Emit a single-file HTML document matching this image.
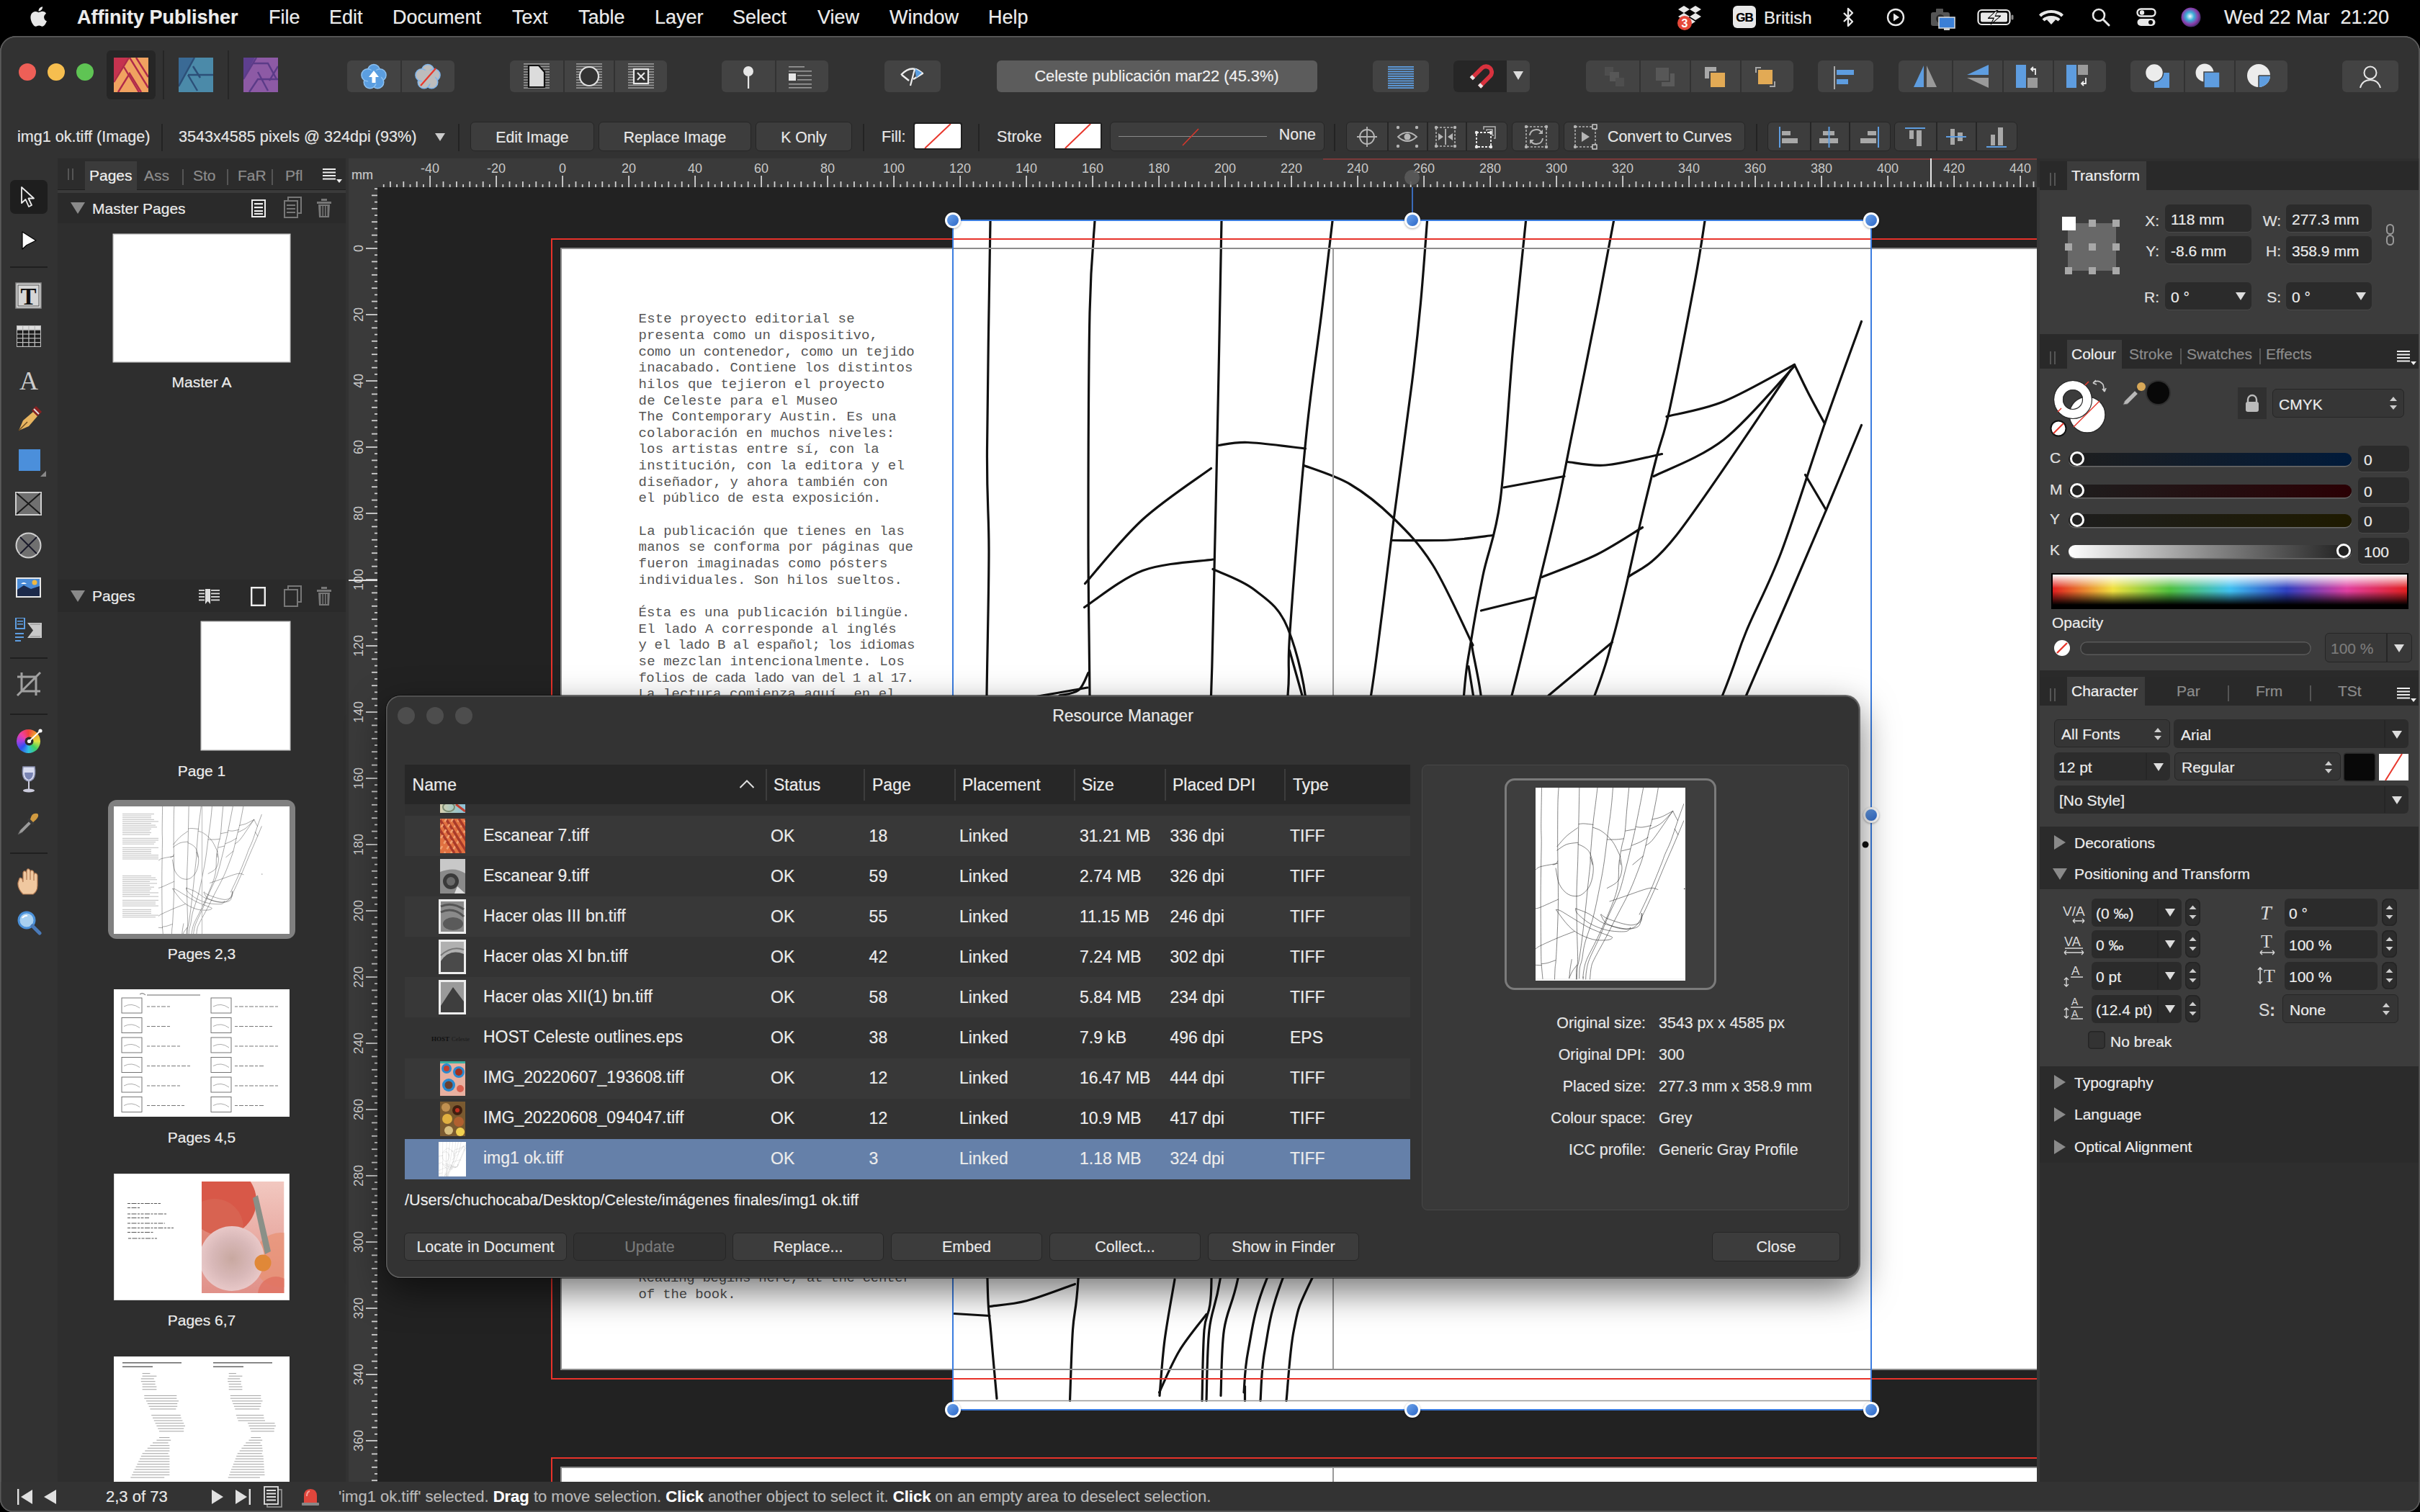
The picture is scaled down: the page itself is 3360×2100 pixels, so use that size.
<!DOCTYPE html><html><head><meta charset="utf-8"><style>
html,body{margin:0;padding:0;}
body{width:3360px;height:2100px;position:relative;overflow:hidden;background:#000;font-family:"Liberation Sans",sans-serif;-webkit-text-stroke:0.2px currentColor;}
pre,.mono{-webkit-text-stroke:0;}
</style></head><body><svg width="0" height="0" style="position:absolute"><defs><symbol id="sk" viewBox="0 0 1275 1651" preserveAspectRatio="none"><rect width="1275" height="1651" fill="#fff"/><g fill="none" stroke="#111" stroke-width="3.2" stroke-linecap="round" stroke-linejoin="round"><path d="M52.0,0.0C51.2,53.3 47.8,243.3 47.5,320.0C47.2,396.7 50.1,403.5 50.0,460.0C49.9,516.5 48.0,585.7 47.0,659.0C46.0,732.3 44.3,809.8 44.0,900.0C43.7,990.2 44.3,1105.0 45.0,1200.0C45.7,1295.0 46.8,1413.3 48.0,1470.0C49.2,1526.7 50.3,1512.4 52.5,1540.0C54.7,1567.6 59.6,1619.6 61.0,1635.5"/><path d="M197.0,0.0C195.8,21.2 191.5,54.2 190.0,127.0C188.5,199.8 188.0,348.3 188.0,437.0C188.0,525.7 189.2,569.0 190.0,659.0C190.8,749.0 193.8,878.5 193.0,977.0C192.2,1075.5 188.2,1167.8 185.0,1250.0C181.8,1332.2 177.1,1421.7 174.0,1470.0C170.9,1518.3 168.4,1511.9 166.5,1540.0C164.6,1568.1 163.2,1622.1 162.5,1638.5"/><path d="M373.0,0.0C372.2,43.3 370.0,165.0 368.0,260.0C366.0,355.0 362.6,503.5 361.0,570.0C359.4,636.5 360.4,600.7 358.5,659.0C356.6,717.3 350.6,829.8 349.5,920.0C348.4,1010.2 350.4,1108.3 352.0,1200.0C353.6,1291.7 359.5,1413.3 359.0,1470.0C358.5,1526.7 351.2,1511.9 349.0,1540.0C346.8,1568.1 346.5,1622.1 346.0,1638.5"/><path d="M527.0,0.0C524.5,21.2 518.2,76.3 512.0,127.0C505.8,177.7 497.3,230.2 490.0,304.0C482.7,377.8 472.2,510.8 468.0,570.0C463.8,629.2 468.7,614.8 465.0,659.0C461.3,703.2 452.5,772.5 446.0,835.0C439.5,897.5 434.5,956.5 426.0,1034.0C417.5,1111.5 404.2,1227.3 395.0,1300.0C385.8,1372.7 377.5,1430.0 371.0,1470.0C364.5,1510.0 359.2,1511.9 356.0,1540.0C352.8,1568.1 352.7,1622.1 352.0,1638.5"/><path d="M658.5,0.0C657.0,18.9 653.0,76.2 649.5,113.5C646.0,150.8 643.8,173.1 637.5,224.0C631.2,274.9 618.5,365.0 611.5,419.0C604.5,473.0 600.7,508.0 595.5,548.0C590.3,588.0 587.3,616.0 580.5,659.0C573.7,702.0 569.2,732.2 554.5,806.0C539.8,879.8 514.4,1014.7 492.0,1102.0C469.6,1189.3 436.1,1268.7 420.0,1330.0C403.9,1391.3 402.8,1435.0 395.5,1470.0C388.2,1505.0 380.4,1513.1 376.5,1540.0C372.6,1566.9 372.8,1616.2 372.0,1631.5"/><path d="M795.5,0.0C792.5,29.9 783.4,114.8 777.5,179.5C771.6,244.2 766.9,335.9 760.0,388.0C753.1,440.1 742.9,458.5 736.0,492.0C729.1,525.5 722.9,561.2 718.5,589.0C714.1,616.8 713.2,613.3 709.5,659.0C705.8,704.7 710.6,793.8 696.0,863.0C681.4,932.2 651.3,1001.2 622.0,1074.0C592.7,1146.8 551.1,1234.0 520.0,1300.0C488.9,1366.0 453.8,1425.2 435.5,1470.0C417.2,1514.8 415.2,1542.8 410.0,1569.0C404.8,1595.2 405.0,1617.3 404.0,1627.0"/><path d="M917.5,0.0C913.5,21.2 903.4,76.3 893.5,127.0C883.6,177.7 866.9,259.7 858.0,304.0C849.1,348.3 847.4,359.7 840.0,393.0C832.6,426.3 824.2,459.7 813.5,504.0C802.8,548.3 792.8,594.5 776.0,659.0C759.2,723.5 737.7,820.8 713.0,891.0C688.3,961.2 656.8,1013.5 628.0,1080.0C599.2,1146.5 568.4,1225.0 540.0,1290.0C511.6,1355.0 475.3,1423.5 457.5,1470.0C439.7,1516.5 438.1,1540.9 433.0,1569.0C427.9,1597.1 428.0,1626.9 427.0,1638.5"/><path d="M1044.0,0.0C1041.8,13.7 1038.6,38.7 1030.5,82.0C1022.4,125.3 1004.3,219.3 995.5,260.0C986.7,300.7 984.2,300.2 977.5,326.0C970.8,351.8 962.8,384.0 955.5,415.0C948.2,446.0 940.2,484.0 933.5,512.0C926.8,540.0 922.6,558.5 915.5,583.0C908.4,607.5 909.6,609.7 891.0,659.0C872.4,708.3 837.5,805.2 804.0,879.0C770.5,952.8 724.0,1035.2 690.0,1102.0C656.0,1168.8 632.0,1218.7 600.0,1280.0C568.0,1341.3 519.1,1426.7 498.0,1470.0C476.9,1513.3 479.3,1511.9 473.5,1540.0C467.7,1568.1 464.8,1622.1 463.0,1638.5"/><path d="M1261.5,139.5C1253.0,163.2 1229.0,228.2 1210.5,281.5C1192.0,334.8 1168.7,410.9 1150.5,459.0C1132.3,507.1 1115.2,536.7 1101.5,570.0C1087.8,603.3 1089.8,605.5 1068.5,659.0C1047.2,712.5 1004.8,820.0 974.0,891.0C943.2,962.0 899.0,1052.7 884.0,1085.0"/><path d="M1261.5,283.5C1253.3,303.2 1229.5,361.2 1212.5,401.5C1195.5,441.8 1178.0,482.6 1159.5,525.5C1141.0,568.4 1128.1,596.6 1101.5,659.0C1074.9,721.4 1036.9,818.2 1000.0,900.0C963.1,981.8 911.8,1098.7 880.0,1150.0C848.2,1201.3 820.8,1198.3 809.0,1208.0"/><path d="M369.0,311.5C375.8,310.8 389.4,306.8 409.5,307.5C429.6,308.2 476.2,314.6 489.5,316.0"/><path d="M183.5,503.5C196.8,488.7 234.3,441.2 263.5,414.5C292.7,387.8 342.7,355.3 358.5,343.5"/><path d="M487.5,339.5C498.2,343.8 530.8,353.3 551.5,365.5C572.2,377.7 592.3,393.8 611.5,412.5C630.7,431.2 648.1,448.6 666.5,478.0C684.9,507.4 712.8,570.5 722.0,589.0"/><path d="M720.5,589.5C722.9,607.9 738.4,664.9 735.0,700.0C731.6,735.1 721.0,773.3 700.0,800.0C679.0,826.7 624.2,850.0 609.0,860.0"/><path d="M182.5,536.5C196.0,528.0 233.8,496.6 263.5,485.5C293.2,474.4 344.8,472.6 361.0,470.0"/><path d="M361.0,483.5C370.6,488.2 401.2,498.3 418.5,512.0C435.8,525.7 452.8,535.0 465.0,565.5C477.2,596.0 492.0,650.9 492.0,695.0C492.0,739.1 480.3,794.2 465.0,830.0C449.7,865.8 422.3,893.7 400.0,910.0C377.7,926.3 354.3,929.7 331.0,928.0C307.7,926.3 281.8,918.0 260.0,900.0C238.2,882.0 214.7,855.0 200.0,820.0C185.3,785.0 176.7,711.7 172.0,690.0"/><path d="M467.5,596.5L485.0,659.0"/><path d="M609.0,443.5C622.5,443.4 666.6,444.2 690.0,443.0C713.4,441.8 739.6,437.6 749.5,436.5"/><path d="M148.0,659.0C152.4,657.8 167.8,656.8 174.5,651.5C181.2,646.2 185.8,631.5 188.0,627.5"/><path d="M991.0,271.5C1004.2,268.0 1040.9,262.5 1070.5,250.5C1100.1,238.5 1152.2,208.0 1168.5,199.5"/><path d="M1168.5,199.5C1171.7,206.0 1180.5,224.8 1187.5,238.5C1194.5,252.2 1206.7,274.3 1210.5,281.5"/><path d="M973.0,354.5C989.2,346.0 1037.9,329.0 1070.5,303.5C1103.1,278.0 1152.2,218.5 1168.5,201.5"/><path d="M937.5,494.5C948.7,484.8 966.8,484.5 1004.5,436.5C1042.2,388.5 1137.0,244.8 1163.5,206.5"/><path d="M853.5,334.5C862.3,335.2 884.7,340.8 906.5,339.0C928.3,337.2 971.5,326.1 984.5,323.5"/><path d="M765.0,370.0L849.0,354.5"/><path d="M818.0,494.5C830.6,489.3 870.2,475.0 893.5,463.5C916.8,452.0 946.8,431.8 957.5,425.5"/><path d="M733.5,541.0L807.0,523.0"/><path d="M827.0,659.0L915.5,585.0"/><path d="M1183.5,352.5L1212.5,401.5"/><path d="M716.0,618.5L722.5,659.0"/><path d="M0.0,704.0C7.0,699.3 10.8,685.3 42.0,676.0C73.2,666.7 162.8,652.7 187.0,648.0"/><path d="M0.0,1034.0C7.0,1032.2 10.0,1036.0 42.0,1023.0C74.0,1010.0 167.0,967.2 192.0,956.0"/><path d="M0.0,1380.0C7.0,1375.3 10.3,1367.8 42.0,1352.0C73.7,1336.2 142.0,1305.3 190.0,1285.0C238.0,1264.7 306.7,1239.2 330.0,1230.0"/><path d="M631.0,973.0C653.2,965.5 708.5,946.7 764.0,928.0C819.5,909.3 917.8,870.3 964.0,861.0C1010.2,851.7 1028.2,870.2 1041.0,872.0"/><path d="M175.5,1045.7C190.3,1065.3 234.8,1130.7 264.4,1163.4C294.0,1196.1 316.3,1219.4 353.3,1241.8C390.3,1264.2 444.0,1287.6 486.6,1297.9C529.2,1308.2 581.0,1306.3 608.8,1303.5C636.6,1300.7 657.0,1289.4 653.3,1281.0C649.6,1272.6 619.9,1267.0 586.6,1253.0C553.3,1239.0 497.7,1219.4 453.3,1197.0C408.9,1174.6 360.7,1142.9 320.0,1118.6C279.3,1094.3 233.0,1063.4 208.9,1051.3C184.8,1039.2 181.1,1046.6 175.5,1045.7"/><path d="M342.2,1034.5C360.7,1042.0 412.6,1057.8 453.3,1079.3C494.0,1100.8 534.8,1141.9 586.6,1163.4C638.5,1184.9 727.4,1202.6 764.4,1208.2C801.4,1213.8 808.8,1193.3 808.8,1197.0C808.8,1200.7 797.7,1226.9 764.4,1230.6C731.1,1234.3 658.8,1230.6 608.8,1219.4C558.8,1208.2 505.1,1185.8 464.4,1163.4C423.7,1141.0 384.8,1103.7 364.4,1085.0C344.0,1066.3 345.9,1059.7 342.2,1051.3C338.5,1042.9 342.2,1037.3 342.2,1034.5"/><path d="M558.8,1085.0C567.1,1090.6 578.2,1105.5 608.8,1118.6C639.3,1131.7 705.1,1154.1 742.1,1163.4C779.1,1172.7 805.1,1178.3 831.0,1174.6C856.9,1170.9 885.7,1157.8 897.7,1141.0C909.7,1124.2 906.9,1066.2 903.2,1073.7C899.5,1081.2 902.4,1163.4 875.5,1185.8C848.6,1208.2 786.6,1211.9 742.1,1208.2C697.6,1204.5 639.3,1182.1 608.8,1163.4C578.2,1144.7 567.1,1109.3 558.8,1096.2C550.5,1083.1 558.8,1086.9 558.8,1085.0"/><path d="M308.0,1470.0C305.7,1484.1 297.5,1527.6 294.0,1554.5C290.5,1581.4 288.2,1618.7 287.0,1631.5"/><path d="M286.5,1627.0C291.2,1617.3 303.6,1587.1 314.5,1569.0C325.4,1550.9 345.8,1526.9 352.0,1518.5"/><path d="M405.5,1618.5L405.5,1638.5"/><path d="M2.0,1517.5L51.0,1520.5"/><path d="M51.0,1507.5C59.7,1506.2 83.2,1504.7 103.0,1499.5C122.8,1494.3 158.4,1480.3 169.5,1476.5"/></g><path d="M0 1638.5 H1275" stroke="#999" stroke-width="1.5"/><circle cx="1267" cy="866" r="4.5" fill="#111"/></symbol></defs></svg><div style="position:absolute;left:0px;top:0px;width:3360px;height:50px;background:#000;"></div><svg style="position:absolute;left:40px;top:7px;" width="26" height="32" viewBox="0 0 24 30"><path fill="#e8e8e8" d="M19.6 15.9c0-3.3 2.7-4.9 2.8-5-1.5-2.2-3.9-2.5-4.7-2.6-2-.2-3.9 1.2-4.9 1.2-1 0-2.6-1.2-4.3-1.1-2.2 0-4.2 1.3-5.3 3.2-2.3 4-.6 9.8 1.6 13 1.1 1.6 2.4 3.3 4.1 3.3 1.6-.1 2.3-1.1 4.3-1.1s2.5 1.1 4.3 1 2.9-1.6 3.9-3.2c1.2-1.8 1.7-3.6 1.8-3.7-.1 0-3.5-1.3-3.6-5zM16.4 6.2c.9-1.1 1.5-2.6 1.3-4.1-1.3.1-2.9.9-3.8 2-.8.9-1.6 2.5-1.4 4 1.5.1 2.9-.8 3.9-1.900z"/></svg><div style="position:absolute;left:107px;top:5.5px;height:37px;line-height:37px;font-size:27px;color:#ececec;font-weight:bold;white-space:nowrap;">Affinity Publisher</div><div style="position:absolute;left:373px;top:5.5px;height:37px;line-height:37px;font-size:27px;color:#ececec;font-weight:normal;white-space:nowrap;">File</div><div style="position:absolute;left:457px;top:5.5px;height:37px;line-height:37px;font-size:27px;color:#ececec;font-weight:normal;white-space:nowrap;">Edit</div><div style="position:absolute;left:545px;top:5.5px;height:37px;line-height:37px;font-size:27px;color:#ececec;font-weight:normal;white-space:nowrap;">Document</div><div style="position:absolute;left:711px;top:5.5px;height:37px;line-height:37px;font-size:27px;color:#ececec;font-weight:normal;white-space:nowrap;">Text</div><div style="position:absolute;left:803px;top:5.5px;height:37px;line-height:37px;font-size:27px;color:#ececec;font-weight:normal;white-space:nowrap;">Table</div><div style="position:absolute;left:909px;top:5.5px;height:37px;line-height:37px;font-size:27px;color:#ececec;font-weight:normal;white-space:nowrap;">Layer</div><div style="position:absolute;left:1017px;top:5.5px;height:37px;line-height:37px;font-size:27px;color:#ececec;font-weight:normal;white-space:nowrap;">Select</div><div style="position:absolute;left:1135px;top:5.5px;height:37px;line-height:37px;font-size:27px;color:#ececec;font-weight:normal;white-space:nowrap;">View</div><div style="position:absolute;left:1235px;top:5.5px;height:37px;line-height:37px;font-size:27px;color:#ececec;font-weight:normal;white-space:nowrap;">Window</div><div style="position:absolute;left:1372px;top:5.5px;height:37px;line-height:37px;font-size:27px;color:#ececec;font-weight:normal;white-space:nowrap;">Help</div><svg style="position:absolute;left:2328px;top:6px;" width="40" height="38" viewBox="0 0 40 38"><g fill="#e8e8e8"><path d="M10 2 L2 7 L10 12 L18 7Z"/><path d="M26 2 L18 7 L26 12 L34 7Z"/><path d="M2 17 L10 22 L18 17 L10 12Z"/><path d="M26 12 L18 17 L26 22 L34 17Z"/><path d="M10 24 L18 29 L26 24 L18 19Z"/></g><circle cx="11" cy="26" r="10" fill="#e5483a"/><text x="11" y="32" font-size="16" font-family="Liberation Sans" fill="#fff" text-anchor="middle" font-weight="bold">3</text></svg><div style="position:absolute;left:2406px;top:8px;width:32px;height:31px;background:#e8e8e8;border-radius:6px;"></div><div style="position:absolute;left:2406px;top:12.5px;height:23px;line-height:23px;font-size:17px;color:#000;font-weight:normal;white-space:nowrap;width:32px;text-align:center;letter-spacing:-1px;"><b>GB</b></div><div style="position:absolute;left:2449px;top:7.5px;height:33px;line-height:33px;font-size:24px;color:#ececec;font-weight:normal;white-space:nowrap;">British</div><svg style="position:absolute;left:2557px;top:10px;" width="18" height="28" viewBox="0 0 18 28"><path d="M3 8 L15 20 L9 26 V2 L15 8 L3 20" fill="none" stroke="#e8e8e8" stroke-width="2.4" stroke-linejoin="round"/></svg><svg style="position:absolute;left:2619px;top:11px;" width="26" height="26" viewBox="0 0 26 26"><circle cx="13" cy="13" r="11" fill="none" stroke="#e8e8e8" stroke-width="2.4"/><path d="M10 7.5 L18 13 L10 18.5Z" fill="#e8e8e8"/></svg><svg style="position:absolute;left:2680px;top:8px;" width="36" height="36" viewBox="0 0 36 36"><rect x="1" y="9" width="26" height="19" rx="3" fill="#555"/><rect x="8" y="4" width="10" height="6" rx="1" fill="#555"/><circle cx="14" cy="18" r="6" fill="#2a2a2a"/><rect x="12" y="16" width="22" height="15" fill="#3b7fd6" stroke="#ddd" stroke-width="1.5"/><rect x="19" y="31" width="8" height="3" fill="#ccc"/></svg><svg style="position:absolute;left:2745px;top:12px;" width="52" height="24" viewBox="0 0 52 24"><rect x="1.5" y="2" width="44" height="20" rx="5" fill="none" stroke="#e8e8e8" stroke-width="2.2"/><rect x="5" y="5.5" width="37" height="13" rx="2" fill="#e8e8e8"/><rect x="47.5" y="8.5" width="3" height="7" rx="1.5" fill="#888"/><path d="M27 2.5 L15 13.5 H23 L19 22 L33 10 H25 L29 2.5Z" fill="#000" stroke="#000" stroke-width="1"/><path d="M26 4 L17 12.5 H24 L21 19.5 L31 11 H24.5 L27.5 4Z" fill="#e8e8e8"/></svg><svg style="position:absolute;left:2831px;top:10px;" width="34" height="26" viewBox="0 0 34 26"><g fill="#e8e8e8"><path d="M17 24 L11 17.5 Q17 13 23 17.5Z"/><path d="M17 12 Q25 12 29.5 16.5 L26.5 19.5 Q22.5 16 17 16 Q11.5 16 7.5 19.5 L4.5 16.5 Q9 12 17 12Z"/><path d="M17 4 Q28 4 34 10.5 L31 13.5 Q25.5 8 17 8 Q8.5 8 3 13.5 L0 10.5 Q6 4 17 4Z"/></g></svg><svg style="position:absolute;left:2904px;top:11px;" width="26" height="26" viewBox="0 0 26 26"><circle cx="10" cy="10" r="8" fill="none" stroke="#e8e8e8" stroke-width="2.6"/><path d="M16 16 L24 24" stroke="#e8e8e8" stroke-width="3" stroke-linecap="round"/></svg><svg style="position:absolute;left:2966px;top:11px;" width="28" height="27" viewBox="0 0 28 27"><rect x="1.5" y="1.5" width="25" height="10" rx="5" fill="none" stroke="#e8e8e8" stroke-width="2.4"/><circle cx="8" cy="6.5" r="3.2" fill="#e8e8e8"/><rect x="1.5" y="15" width="25" height="10" rx="5" fill="#e8e8e8"/><circle cx="20" cy="20" r="3" fill="#000"/></svg><svg style="position:absolute;left:3028px;top:10px;" width="28" height="28" viewBox="0 0 28 28"><defs><radialGradient id="siri" cx="45%" cy="45%" r="60%"><stop offset="0" stop-color="#f6f6ff"/><stop offset="0.35" stop-color="#3ab0d8"/><stop offset="0.7" stop-color="#8a3aa8"/><stop offset="1" stop-color="#2a2a5a"/></radialGradient></defs><circle cx="14" cy="14" r="13.5" fill="url(#siri)"/></svg><div style="position:absolute;left:3088px;top:5.5px;height:37px;line-height:37px;font-size:27px;color:#ececec;font-weight:normal;white-space:nowrap;">Wed 22 Mar&nbsp; 21:20</div><div style="position:absolute;left:0;top:50px;width:3360px;height:2050px;background:#323232;border-radius:22px 22px 18px 18px;overflow:hidden;box-shadow:inset 0 0 0 1.5px #5a5a5a;"></div><div style="position:absolute;left:26px;top:88px;width:24px;height:24px;background:#ee5f57;border-radius:50%;"></div><div style="position:absolute;left:66px;top:88px;width:24px;height:24px;background:#f6be4f;border-radius:50%;"></div><div style="position:absolute;left:106px;top:88px;width:24px;height:24px;background:#5fc454;border-radius:50%;"></div><div style="position:absolute;left:148px;top:70px;width:68px;height:68px;background:#262626;border-radius:6px;"></div><svg style="position:absolute;left:158px;top:80px;" width="48" height="48" viewBox="0 0 48 48"><rect width="48" height="48" fill="#f0a260"/><path d="M0 0 H20 L0 32Z" fill="#c6334f"/><g stroke="#b02a4a" stroke-width="2.4" fill="none"><path d="M0 34 L21 0"/><path d="M6 48 L22 22 L38 48"/><path d="M22 0 L48 42"/><path d="M31 0 L48 27"/><path d="M14 13 L35 48"/></g></svg><div style="position:absolute;left:226px;top:70px;width:2px;height:68px;background:#262626;"></div><svg style="position:absolute;left:248px;top:80px;" width="48" height="48" viewBox="0 0 48 48"><rect width="48" height="48" fill="#4b8aa9"/><path d="M0 0 H22 L0 40Z" fill="#3a6a95"/><g stroke="#2c4f78" stroke-width="2.4" fill="none"><path d="M0 40 L22 0"/><path d="M13 24 L48 24"/><path d="M13 24 L26 46"/><path d="M20 12 L30 28"/></g></svg><div style="position:absolute;left:316px;top:70px;width:2px;height:68px;background:#262626;"></div><svg style="position:absolute;left:338px;top:80px;" width="48" height="48" viewBox="0 0 48 48"><rect width="48" height="48" fill="#8d5aa5"/><path d="M0 0 H16 L0 30Z" fill="#5e3f8f"/><g stroke="#5b3b88" stroke-width="2.4" fill="none"><path d="M0 30 L18 0"/><path d="M14 8 L34 8 L46 30"/><path d="M48 30 L20 30 L8 48"/><path d="M34 46 L20 20"/><path d="M48 12 L36 32"/></g></svg><div style="position:absolute;left:482px;top:84px;width:149px;height:44px;background:#434343;border-radius:6px;"></div><div style="position:absolute;left:556px;top:84px;width:2px;height:44px;background:#323232;"></div><div style="position:absolute;left:708px;top:84px;width:218px;height:44px;background:#434343;border-radius:6px;"></div><div style="position:absolute;left:782px;top:84px;width:2px;height:44px;background:#323232;"></div><div style="position:absolute;left:852px;top:84px;width:2px;height:44px;background:#323232;"></div><div style="position:absolute;left:1002px;top:84px;width:148px;height:44px;background:#434343;border-radius:6px;"></div><div style="position:absolute;left:1076px;top:84px;width:2px;height:44px;background:#323232;"></div><div style="position:absolute;left:1228px;top:84px;width:78px;height:44px;background:#434343;border-radius:6px;"></div><div style="position:absolute;left:1384px;top:84px;width:445px;height:44px;background:#5c5c5c;border-radius:6px;"></div><div style="position:absolute;left:1106px;width:1000px;text-align:center;top:91.0px;height:30px;line-height:30px;font-size:21.8px;color:#f0f0f0;font-weight:normal;white-space:nowrap;">Celeste publicación mar22 (45.3%)</div><div style="position:absolute;left:1906px;top:84px;width:78px;height:44px;background:#434343;border-radius:6px;"></div><div style="position:absolute;left:2018px;top:84px;width:106px;height:44px;background:#434343;border-radius:6px;"></div><div style="position:absolute;left:2018px;top:84px;width:74px;height:44px;background:#262626;border-radius:6px 0 0 6px;"></div><div style="position:absolute;left:2202px;top:84px;width:288px;height:44px;background:#434343;border-radius:6px;"></div><div style="position:absolute;left:2276px;top:84px;width:2px;height:44px;background:#323232;"></div><div style="position:absolute;left:2346px;top:84px;width:2px;height:44px;background:#323232;"></div><div style="position:absolute;left:2416px;top:84px;width:2px;height:44px;background:#323232;"></div><div style="position:absolute;left:2524px;top:84px;width:77px;height:44px;background:#434343;border-radius:6px;"></div><div style="position:absolute;left:2636px;top:84px;width:288px;height:44px;background:#434343;border-radius:6px;"></div><div style="position:absolute;left:2710px;top:84px;width:2px;height:44px;background:#323232;"></div><div style="position:absolute;left:2780px;top:84px;width:2px;height:44px;background:#323232;"></div><div style="position:absolute;left:2850px;top:84px;width:2px;height:44px;background:#323232;"></div><div style="position:absolute;left:2958px;top:84px;width:218px;height:44px;background:#434343;border-radius:6px;"></div><div style="position:absolute;left:3032px;top:84px;width:2px;height:44px;background:#323232;"></div><div style="position:absolute;left:3102px;top:84px;width:2px;height:44px;background:#323232;"></div><div style="position:absolute;left:3252px;top:84px;width:78px;height:44px;background:#434343;border-radius:6px;"></div><svg style="position:absolute;left:501px;top:88px;" width="36" height="38" viewBox="0 0 36 38"><circle cx="18.0" cy="10.0" r="8.5" fill="#5b9ee0" stroke="#8cc0f0" stroke-width="1.5"/><circle cx="26.6" cy="16.2" r="8.5" fill="#5b9ee0" stroke="#8cc0f0" stroke-width="1.5"/><circle cx="23.3" cy="26.3" r="8.5" fill="#5b9ee0" stroke="#8cc0f0" stroke-width="1.5"/><circle cx="12.7" cy="26.3" r="8.5" fill="#5b9ee0" stroke="#8cc0f0" stroke-width="1.5"/><circle cx="9.4" cy="16.2" r="8.5" fill="#5b9ee0" stroke="#8cc0f0" stroke-width="1.5"/><circle cx="18" cy="19" r="10" fill="#5b9ee0"/><path d="M18 10 L11 19 H15.5 V27 H20.5 V19 H25Z" fill="#fff"/></svg><svg style="position:absolute;left:576px;top:88px;" width="36" height="38" viewBox="0 0 36 38"><circle cx="18.0" cy="10.0" r="8.5" fill="#bdbdbd" stroke="#7fb5ec" stroke-width="1.5"/><circle cx="26.6" cy="16.2" r="8.5" fill="#bdbdbd" stroke="#7fb5ec" stroke-width="1.5"/><circle cx="23.3" cy="26.3" r="8.5" fill="#bdbdbd" stroke="#7fb5ec" stroke-width="1.5"/><circle cx="12.7" cy="26.3" r="8.5" fill="#bdbdbd" stroke="#7fb5ec" stroke-width="1.5"/><circle cx="9.4" cy="16.2" r="8.5" fill="#bdbdbd" stroke="#7fb5ec" stroke-width="1.5"/><circle cx="18" cy="19" r="10" fill="#bdbdbd"/><path d="M8 31 L29 7" stroke="#e8372c" stroke-width="2.2"/></svg><svg style="position:absolute;left:727px;top:88px;" width="36" height="36" viewBox="0 0 36 36"><rect x="0" y="0.0" width="36" height="1.6" fill="#9a9a9a"/><rect x="0" y="3.7" width="36" height="1.6" fill="#9a9a9a"/><rect x="0" y="7.4" width="36" height="1.6" fill="#9a9a9a"/><rect x="0" y="11.1" width="36" height="1.6" fill="#9a9a9a"/><rect x="0" y="14.8" width="36" height="1.6" fill="#9a9a9a"/><rect x="0" y="18.5" width="36" height="1.6" fill="#9a9a9a"/><rect x="0" y="22.2" width="36" height="1.6" fill="#9a9a9a"/><rect x="0" y="25.9" width="36" height="1.6" fill="#9a9a9a"/><rect x="0" y="29.6" width="36" height="1.6" fill="#9a9a9a"/><rect x="0" y="33.3" width="36" height="1.6" fill="#9a9a9a"/><path d="M7 3 H21 L29 12 V33 H7Z" fill="#dcdcdc" stroke="#111" stroke-width="2.2"/></svg><svg style="position:absolute;left:800px;top:88px;" width="36" height="36" viewBox="0 0 36 36"><rect x="0" y="0.0" width="36" height="1.6" fill="#9a9a9a"/><rect x="0" y="3.7" width="36" height="1.6" fill="#9a9a9a"/><rect x="0" y="7.4" width="36" height="1.6" fill="#9a9a9a"/><rect x="0" y="11.1" width="36" height="1.6" fill="#9a9a9a"/><rect x="0" y="14.8" width="36" height="1.6" fill="#9a9a9a"/><rect x="0" y="18.5" width="36" height="1.6" fill="#9a9a9a"/><rect x="0" y="22.2" width="36" height="1.6" fill="#9a9a9a"/><rect x="0" y="25.9" width="36" height="1.6" fill="#9a9a9a"/><rect x="0" y="29.6" width="36" height="1.6" fill="#9a9a9a"/><rect x="0" y="33.3" width="36" height="1.6" fill="#9a9a9a"/><circle cx="18" cy="18" r="13" fill="#323232" stroke="#e0e0e0" stroke-width="2.2"/><circle cx="18" cy="18" r="11" fill="none" stroke="#888" stroke-width="0"/></svg><svg style="position:absolute;left:872px;top:88px;" width="36" height="36" viewBox="0 0 36 36"><rect x="0" y="0.0" width="36" height="1.6" fill="#9a9a9a"/><rect x="0" y="3.7" width="36" height="1.6" fill="#9a9a9a"/><rect x="0" y="7.4" width="36" height="1.6" fill="#9a9a9a"/><rect x="0" y="11.1" width="36" height="1.6" fill="#9a9a9a"/><rect x="0" y="14.8" width="36" height="1.6" fill="#9a9a9a"/><rect x="0" y="18.5" width="36" height="1.6" fill="#9a9a9a"/><rect x="0" y="22.2" width="36" height="1.6" fill="#9a9a9a"/><rect x="0" y="25.9" width="36" height="1.6" fill="#9a9a9a"/><rect x="0" y="29.6" width="36" height="1.6" fill="#9a9a9a"/><rect x="0" y="33.3" width="36" height="1.6" fill="#9a9a9a"/><rect x="8" y="8" width="20" height="20" fill="#323232" stroke="#e6e6e6" stroke-width="2.2"/><path d="M13 13 L23 23 M23 13 L13 23" stroke="#e6e6e6" stroke-width="2.2"/></svg><svg style="position:absolute;left:1024px;top:90px;" width="30" height="34" viewBox="0 0 30 34"><circle cx="15" cy="9" r="7" fill="#e6e6e6"/><rect x="14" y="14" width="2.2" height="19" fill="#e6e6e6"/></svg><svg style="position:absolute;left:1095px;top:90px;" width="36" height="34" viewBox="0 0 36 34"><g fill="#9a9a9a"><rect x="0" y="2" width="22" height="1.6"/><rect x="0" y="8" width="32" height="1.6"/><rect x="12" y="14" width="20" height="1.6"/><rect x="12" y="20" width="20" height="1.6"/><rect x="0" y="26" width="32" height="1.6"/><rect x="0" y="31" width="32" height="1.6"/></g><rect x="0" y="12" width="10" height="10" fill="#e6e6e6"/></svg><svg style="position:absolute;left:1248px;top:90px;" width="36" height="30" viewBox="0 0 36 30"><path d="M3 14 Q18 -2 33 12 L20 20" fill="none" stroke="#eee" stroke-width="2.4" stroke-linejoin="round"/><path d="M4 14 L14 22" stroke="#eee" stroke-width="2.4"/><path d="M22 5 L32 11 L24 18Z" fill="#5b9ee0"/><path d="M22 6 L16 29" stroke="#eee" stroke-width="2.2"/></svg><svg style="position:absolute;left:1927px;top:92px;" width="37" height="32" viewBox="0 0 37 32"><rect x="0" y="0.0" width="36" height="1.8" fill="#5e9de0"/><rect x="0" y="3.2" width="36" height="1.8" fill="#5e9de0"/><rect x="0" y="6.5" width="36" height="1.8" fill="#5e9de0"/><rect x="0" y="9.8" width="36" height="1.8" fill="#5e9de0"/><rect x="0" y="13.0" width="36" height="1.8" fill="#5e9de0"/><rect x="0" y="16.2" width="36" height="1.8" fill="#5e9de0"/><rect x="0" y="19.5" width="36" height="1.8" fill="#5e9de0"/><rect x="0" y="22.8" width="36" height="1.8" fill="#5e9de0"/><rect x="0" y="26.0" width="36" height="1.8" fill="#5e9de0"/><rect x="0" y="29.2" width="36" height="1.8" fill="#5e9de0"/></svg><svg style="position:absolute;left:2036px;top:88px;" width="38" height="38" viewBox="0 0 38 38"><path d="M6.8 21.3 L21.8 6.3 A8 8 0 0 1 33.1 17.6 L18.1 32.6" fill="none" stroke="#d8323e" stroke-width="5.8"/><path d="M6.8 21.3 L10 18.1 M18.1 32.6 L21.3 29.4" stroke="#e6e6e6" stroke-width="5.8"/></svg><svg style="position:absolute;left:2100px;top:98px;" width="16" height="14" viewBox="0 0 16 14"><path d="M1 1 H15 L8 13Z" fill="#ddd"/></svg><svg style="position:absolute;left:2225px;top:90px;" width="34" height="34" viewBox="0 0 34 34"><rect x="3" y="3" width="12" height="12" fill="#4e4e4e"/><rect x="10" y="10" width="13" height="13" fill="#575757"/><rect x="18" y="18" width="12" height="12" fill="#4e4e4e"/></svg><svg style="position:absolute;left:2295px;top:90px;" width="34" height="34" viewBox="0 0 34 34"><rect x="4" y="4" width="18" height="18" fill="#575757"/><path d="M24 12 H30 V30 H12 V24 H24Z" fill="#5a5a5a"/></svg><svg style="position:absolute;left:2364px;top:90px;" width="34" height="34" viewBox="0 0 34 34"><path d="M3 3 H19 V9 H9 V19 H3Z" fill="#a8a8a8"/><rect x="11" y="11" width="20" height="20" fill="#e2aa55"/></svg><svg style="position:absolute;left:2434px;top:90px;" width="34" height="34" viewBox="0 0 34 34"><path d="M3 3 H11 V5 H5 V11 H3Z" fill="#a8a8a8"/><path d="M31 31 H23 V29 H29 V23 H31Z" fill="#a8a8a8"/><rect x="7" y="7" width="20" height="20" fill="#e2aa55"/></svg><svg style="position:absolute;left:2544px;top:90px;" width="34" height="34" viewBox="0 0 34 34"><rect x="2" y="2" width="2" height="32" fill="#aaa"/><rect x="6" y="7" width="24" height="7" fill="#5e9de0"/><rect x="6" y="20" width="16" height="7" fill="#5e9de0"/></svg><svg style="position:absolute;left:2655px;top:88px;" width="36" height="36" viewBox="0 0 36 36"><path d="M16 3 V33 H2Z" fill="#5e9de0"/><path d="M20 3 V33 H34Z" fill="#9a9a9a"/></svg><svg style="position:absolute;left:2729px;top:88px;" width="36" height="36" viewBox="0 0 36 36"><path d="M32 2 V16 H2Z" fill="#5e9de0"/><path d="M32 34 V20 H2Z" fill="#9a9a9a"/></svg><svg style="position:absolute;left:2798px;top:88px;" width="36" height="36" viewBox="0 0 36 36"><rect x="1" y="2" width="14" height="32" fill="#5e9de0"/><rect x="17" y="20" width="14" height="14" fill="#9a9a9a"/><path d="M28 16 V8 H22 M25 5 L22 8 L25 11" fill="none" stroke="#eee" stroke-width="1.8"/></svg><svg style="position:absolute;left:2868px;top:88px;" width="36" height="36" viewBox="0 0 36 36"><rect x="1" y="2" width="14" height="32" fill="#5e9de0"/><rect x="17" y="2" width="14" height="14" fill="#9a9a9a"/><path d="M28 20 V28 H22 M25 25 L22 28 L25 31" fill="none" stroke="#eee" stroke-width="1.8"/></svg><svg style="position:absolute;left:2978px;top:88px;" width="36" height="36" viewBox="0 0 36 36"><rect x="13" y="13" width="21" height="21" fill="#5e9de0"/><circle cx="13" cy="13" r="12.5" fill="#ececec" stroke="#434343" stroke-width="1.5"/></svg><svg style="position:absolute;left:3048px;top:88px;" width="36" height="36" viewBox="0 0 36 36"><circle cx="13" cy="13" r="12.5" fill="#ececec"/><rect x="12" y="12" width="22" height="22" fill="#5e9de0" stroke="#434343" stroke-width="1.5"/></svg><svg style="position:absolute;left:3120px;top:88px;" width="36" height="36" viewBox="0 0 36 36"><circle cx="16" cy="17" r="16" fill="#ececec"/><path d="M16 17 H32 A16 16 0 0 1 16 33Z" fill="#5e9de0"/><path d="M16 17 H32 M16 17 V33" stroke="#434343" stroke-width="1.5"/></svg><svg style="position:absolute;left:3274px;top:90px;" width="34" height="34" viewBox="0 0 34 34"><circle cx="17" cy="11" r="8.5" fill="none" stroke="#e6e6e6" stroke-width="2"/><path d="M3 32 Q6 21 17 21 Q28 21 31 32" fill="none" stroke="#e6e6e6" stroke-width="2"/></svg><div style="position:absolute;left:24px;top:175.0px;height:30px;line-height:30px;font-size:21.6px;color:#e6e6e6;font-weight:normal;white-space:nowrap;">img1 ok.tiff (Image)</div><div style="position:absolute;left:224px;top:172px;width:2px;height:38px;background:#232323;"></div><div style="position:absolute;left:248px;top:175.0px;height:30px;line-height:30px;font-size:21.6px;color:#e6e6e6;font-weight:normal;white-space:nowrap;">3543x4585 pixels @ 324dpi (93%)</div><svg style="position:absolute;left:604px;top:185px;" width="14" height="11" viewBox="0 0 14 11"><path d="M0 0 H14 L7 11Z" fill="#ccc"/></svg><div style="position:absolute;left:636px;top:172px;width:2px;height:38px;background:#232323;"></div><div style="position:absolute;left:653px;top:169px;width:172px;height:41px;background:#3d3d3d;border-radius:6px;box-sizing:border-box;border:1.5px solid #262626;"></div><div style="position:absolute;left:239.0px;width:1000px;text-align:center;top:176.0px;height:29px;line-height:29px;font-size:21.2px;color:#e8e8e8;font-weight:normal;white-space:nowrap;">Edit Image</div><div style="position:absolute;left:831px;top:169px;width:212px;height:41px;background:#3d3d3d;border-radius:6px;box-sizing:border-box;border:1.5px solid #262626;"></div><div style="position:absolute;left:437.0px;width:1000px;text-align:center;top:176.0px;height:29px;line-height:29px;font-size:21.2px;color:#e8e8e8;font-weight:normal;white-space:nowrap;">Replace Image</div><div style="position:absolute;left:1049px;top:169px;width:134px;height:41px;background:#3d3d3d;border-radius:6px;box-sizing:border-box;border:1.5px solid #262626;"></div><div style="position:absolute;left:616.0px;width:1000px;text-align:center;top:176.0px;height:29px;line-height:29px;font-size:21.2px;color:#e8e8e8;font-weight:normal;white-space:nowrap;">K Only</div><div style="position:absolute;left:1198px;top:172px;width:2px;height:38px;background:#232323;"></div><div style="position:absolute;left:1224px;top:175.0px;height:30px;line-height:30px;font-size:21.6px;color:#e6e6e6;font-weight:normal;white-space:nowrap;">Fill:</div><div style="position:absolute;left:1268px;top:170px;width:68px;height:38px;background:#1f1f1f;border-radius:3px;"></div><svg style="position:absolute;left:1270px;top:172px;border-radius:2px;" width="64" height="34" viewBox="0 0 64 34"><rect width="64" height="34" fill="#fff"/><path d="M14.1 34 L49.9 0" stroke="#e8372c" stroke-width="2"/></svg><div style="position:absolute;left:1358px;top:172px;width:2px;height:38px;background:#232323;"></div><div style="position:absolute;left:1384px;top:175.0px;height:30px;line-height:30px;font-size:21.6px;color:#e6e6e6;font-weight:normal;white-space:nowrap;">Stroke</div><div style="position:absolute;left:1463px;top:170px;width:67px;height:38px;background:#1f1f1f;border-radius:3px;"></div><svg style="position:absolute;left:1465px;top:172px;" width="63" height="34" viewBox="0 0 63 34"><rect width="63" height="34" fill="#fff"/><path d="M13.9 34 L49.1 0" stroke="#e8372c" stroke-width="2"/></svg><div style="position:absolute;left:1541px;top:169px;width:298px;height:41px;background:#3d3d3d;border-radius:6px;box-sizing:border-box;border:1.5px solid #262626;"></div><div style="position:absolute;left:1553px;top:189px;width:206px;height:1px;background:#8a8a8a;"></div><svg style="position:absolute;left:1640px;top:177px;" width="26" height="26" viewBox="0 0 26 26"><path d="M2 25 L24 2" stroke="#d8372c" stroke-width="1.6"/></svg><div style="position:absolute;left:827px;width:1000px;text-align:right;top:172.5px;height:29px;line-height:29px;font-size:21.4px;color:#e8e8e8;font-weight:normal;white-space:nowrap;">None</div><div style="position:absolute;left:1852px;top:172px;width:2px;height:38px;background:#232323;"></div><div style="position:absolute;left:1869px;top:169px;width:224px;height:41px;background:#3d3d3d;border-radius:6px;box-sizing:border-box;border:1.5px solid #262626;"></div><div style="position:absolute;left:1926px;top:170px;width:1.5px;height:39px;background:#262626;"></div><div style="position:absolute;left:1981px;top:170px;width:1.5px;height:39px;background:#262626;"></div><div style="position:absolute;left:2035px;top:170px;width:1.5px;height:39px;background:#262626;"></div><svg style="position:absolute;left:1882px;top:174px;" width="32" height="32" viewBox="0 0 32 32"><circle cx="16" cy="16" r="10" fill="none" stroke="#b5b5b5" stroke-width="1.8"/><path d="M16 2 V30 M2 16 H30" stroke="#b5b5b5" stroke-width="1.8"/></svg><svg style="position:absolute;left:1938px;top:174px;" width="32" height="32" viewBox="0 0 32 32"><path d="M3 16 Q16 4 29 16 Q16 28 3 16Z" fill="none" stroke="#b5b5b5" stroke-width="1.8"/><circle cx="16" cy="16" r="4.5" fill="#b5b5b5"/><g fill="#b5b5b5"><circle cx="3" cy="3" r="2.2"/><circle cx="29" cy="3" r="2.2"/><circle cx="3" cy="29" r="2.2"/><circle cx="29" cy="29" r="2.2"/></g></svg><svg style="position:absolute;left:1991px;top:174px;" width="32" height="32" viewBox="0 0 32 32"><rect x="3" y="3" width="26" height="26" fill="none" stroke="#b5b5b5" stroke-width="1.5" stroke-dasharray="3 2"/><path d="M16 5 V27" stroke="#b5b5b5" stroke-width="1.8"/><path d="M6 11 L13 16 L6 21Z M26 11 L19 16 L26 21Z" fill="#b5b5b5"/><g fill="#b5b5b5"><circle cx="3" cy="3" r="2.2"/><circle cx="29" cy="3" r="2.2"/><circle cx="3" cy="29" r="2.2"/><circle cx="29" cy="29" r="2.2"/></g></svg><svg style="position:absolute;left:2046px;top:172px;" width="36" height="36" viewBox="0 0 36 36"><rect x="4" y="12" width="20" height="20" fill="none" stroke="#eee" stroke-width="1.8" stroke-dasharray="3 2"/><g fill="#eee"><circle cx="4" cy="12" r="2.2"/><circle cx="24" cy="12" r="2.2"/><circle cx="4" cy="32" r="2.2"/><circle cx="24" cy="32" r="2.2"/></g><path d="M14 8 V4 H30 V20 H28 M18 10 V8 H26 V16 H28" fill="none" stroke="#b5b5b5" stroke-width="1.5"/></svg><div style="position:absolute;left:2099px;top:169px;width:66px;height:41px;background:#3d3d3d;border-radius:6px;box-sizing:border-box;border:1.5px solid #262626;"></div><svg style="position:absolute;left:2115px;top:172px;" width="36" height="36" viewBox="0 0 36 36"><rect x="4" y="4" width="28" height="28" fill="none" stroke="#b5b5b5" stroke-width="1.5" stroke-dasharray="3 2"/><g fill="#b5b5b5"><circle cx="4" cy="4" r="2.2"/><circle cx="32" cy="4" r="2.2"/><circle cx="4" cy="32" r="2.2"/><circle cx="32" cy="32" r="2.2"/></g><path d="M9 16 A9 9 0 0 1 26 13 M27 20 A9 9 0 0 1 10 23" fill="none" stroke="#b5b5b5" stroke-width="2"/><path d="M27 8 V14 H21Z M9 28 V22 H15Z" fill="#b5b5b5"/></svg><div style="position:absolute;left:2171px;top:169px;width:252px;height:41px;background:#3d3d3d;border-radius:6px;box-sizing:border-box;border:1.5px solid #262626;"></div><svg style="position:absolute;left:2183px;top:172px;" width="36" height="36" viewBox="0 0 36 36"><rect x="4" y="4" width="28" height="28" fill="none" stroke="#b5b5b5" stroke-width="1.5" stroke-dasharray="3 2"/><g fill="#b5b5b5"><circle cx="4" cy="32" r="2.2"/><circle cx="4" cy="4" r="2.2"/></g><rect x="28" y="1" width="6" height="6" fill="#3d3d3d" stroke="#ddd" stroke-width="1.3"/><rect x="28" y="29" width="6" height="6" fill="#3d3d3d" stroke="#ddd" stroke-width="1.3"/><path d="M13 11 L24 18 L13 25Z" fill="#b5b5b5"/></svg><div style="position:absolute;left:2232px;top:175.5px;height:29px;line-height:29px;font-size:21.4px;color:#e8e8e8;font-weight:normal;white-space:nowrap;">Convert to Curves</div><div style="position:absolute;left:2438px;top:172px;width:2px;height:38px;background:#232323;"></div><div style="position:absolute;left:2454px;top:169px;width:171px;height:41px;background:#3d3d3d;border-radius:6px;box-sizing:border-box;border:1.5px solid #262626;"></div><div style="position:absolute;left:2513px;top:170px;width:1.5px;height:39px;background:#262626;"></div><div style="position:absolute;left:2567px;top:170px;width:1.5px;height:39px;background:#262626;"></div><div style="position:absolute;left:2630px;top:169px;width:171px;height:41px;background:#3d3d3d;border-radius:6px;box-sizing:border-box;border:1.5px solid #262626;"></div><div style="position:absolute;left:2688px;top:170px;width:1.5px;height:39px;background:#262626;"></div><div style="position:absolute;left:2743px;top:170px;width:1.5px;height:39px;background:#262626;"></div><svg style="position:absolute;left:2467px;top:174px;" width="32" height="32" viewBox="0 0 32 32"><rect x="3" y="2" width="2" height="29" fill="#5e9de0"/><rect x="7" y="8" width="12" height="6" fill="#a8a8a8"/><rect x="7" y="18" width="22" height="7" fill="#a8a8a8"/></svg><svg style="position:absolute;left:2524px;top:174px;" width="32" height="32" viewBox="0 0 32 32"><rect x="7" y="8" width="16" height="6" fill="#a8a8a8"/><rect x="2" y="18" width="26" height="7" fill="#a8a8a8"/><rect x="14.5" y="2" width="2" height="29" fill="#5e9de0"/></svg><svg style="position:absolute;left:2580px;top:174px;" width="32" height="32" viewBox="0 0 32 32"><rect x="27" y="2" width="2" height="29" fill="#5e9de0"/><rect x="13" y="8" width="12" height="6" fill="#a8a8a8"/><rect x="3" y="18" width="22" height="7" fill="#a8a8a8"/></svg><svg style="position:absolute;left:2643px;top:174px;" width="32" height="32" viewBox="0 0 32 32"><rect x="2" y="3" width="28" height="2" fill="#5e9de0"/><rect x="8" y="7" width="6" height="12" fill="#a8a8a8"/><rect x="18" y="7" width="7" height="22" fill="#a8a8a8"/></svg><svg style="position:absolute;left:2700px;top:174px;" width="32" height="32" viewBox="0 0 32 32"><rect x="8" y="5" width="6" height="22" fill="#a8a8a8"/><rect x="18" y="10" width="7" height="12" fill="#a8a8a8"/><rect x="2" y="15" width="28" height="2" fill="#5e9de0"/></svg><svg style="position:absolute;left:2756px;top:174px;" width="32" height="32" viewBox="0 0 32 32"><rect x="8" y="13" width="6" height="15" fill="#a8a8a8"/><rect x="18" y="3" width="7" height="25" fill="#a8a8a8"/><rect x="2" y="29" width="28" height="2" fill="#5e9de0"/></svg><div style="position:absolute;left:14px;top:250px;width:52px;height:47px;background:#1e1e1e;border-radius:7px;"></div><svg style="position:absolute;left:26px;top:258px;" width="28" height="32" viewBox="0 0 28 32"><path d="M4 2 L4 24 L9.5 19 L14 29 L18 27 L13.5 17.5 L21 17.5Z" fill="#1e1e1e" stroke="#eee" stroke-width="1.8" stroke-linejoin="round"/></svg><svg style="position:absolute;left:28px;top:320px;" width="24" height="28" viewBox="0 0 24 28"><path d="M3 2 L3 26 L9 20.5 L22 14Z" fill="#fff" stroke="#000" stroke-width="1.2" stroke-linejoin="round"/></svg><div style="position:absolute;left:14px;top:370px;width:52px;height:2px;background:#1f1f1f;"></div><div style="position:absolute;left:14px;top:913px;width:52px;height:2px;background:#1f1f1f;"></div><div style="position:absolute;left:14px;top:991px;width:52px;height:2px;background:#1f1f1f;"></div><div style="position:absolute;left:14px;top:1184px;width:52px;height:2px;background:#1f1f1f;"></div><svg style="position:absolute;left:21px;top:392px;" width="37" height="37" viewBox="0 0 37 37"><rect x="1" y="1" width="35" height="35" fill="#d6d6d6" stroke="#888" stroke-width="1.5"/><rect x="4" y="4" width="29" height="29" fill="none" stroke="#555" stroke-width="1"/><text x="18.5" y="31" font-family="Liberation Serif" font-size="33" font-weight="bold" text-anchor="middle" fill="#111">T</text></svg><svg style="position:absolute;left:23px;top:452px;" width="34" height="30" viewBox="0 0 34 30"><rect x="0" y="0" width="34" height="30" fill="#bbb"/><rect x="1.0" y="1.0" width="7" height="4.6" fill="#ddd"/><rect x="9.3" y="1.0" width="7" height="4.6" fill="#ddd"/><rect x="17.6" y="1.0" width="7" height="4.6" fill="#ddd"/><rect x="25.9" y="1.0" width="7" height="4.6" fill="#ddd"/><rect x="1.0" y="6.8" width="7" height="4.6" fill="#1e1e1e"/><rect x="9.3" y="6.8" width="7" height="4.6" fill="#1e1e1e"/><rect x="17.6" y="6.8" width="7" height="4.6" fill="#1e1e1e"/><rect x="25.9" y="6.8" width="7" height="4.6" fill="#1e1e1e"/><rect x="1.0" y="12.6" width="7" height="4.6" fill="#1e1e1e"/><rect x="9.3" y="12.6" width="7" height="4.6" fill="#1e1e1e"/><rect x="17.6" y="12.6" width="7" height="4.6" fill="#1e1e1e"/><rect x="25.9" y="12.6" width="7" height="4.6" fill="#1e1e1e"/><rect x="1.0" y="18.4" width="7" height="4.6" fill="#1e1e1e"/><rect x="9.3" y="18.4" width="7" height="4.6" fill="#1e1e1e"/><rect x="17.6" y="18.4" width="7" height="4.6" fill="#1e1e1e"/><rect x="25.9" y="18.4" width="7" height="4.6" fill="#1e1e1e"/><rect x="1.0" y="24.2" width="7" height="4.6" fill="#1e1e1e"/><rect x="9.3" y="24.2" width="7" height="4.6" fill="#1e1e1e"/><rect x="17.6" y="24.2" width="7" height="4.6" fill="#1e1e1e"/><rect x="25.9" y="24.2" width="7" height="4.6" fill="#1e1e1e"/></svg><svg style="position:absolute;left:22px;top:508px;" width="36" height="36" viewBox="0 0 36 36"><text x="18" y="33" font-family="Liberation Serif" font-size="36" text-anchor="middle" fill="#ccc">A</text></svg><svg style="position:absolute;left:22px;top:564px;" width="36" height="36" viewBox="0 0 36 36"><path d="M4 34 L10 20 L24 8 L30 14 L18 28Z" fill="#e8b560"/><path d="M4 34 L16 22" stroke="#6a4a20" stroke-width="1.5"/><path d="M22 6 L28 0 L36 8 L30 14Z" fill="#8a2020"/><path d="M25 4 L32 11" stroke="#ddd" stroke-width="2"/></svg><svg style="position:absolute;left:24px;top:622px;" width="40" height="40" viewBox="0 0 40 40"><rect x="2" y="2" width="30" height="30" fill="#4b8fdb"/><path d="M40 40 L40 32 L32 40Z" fill="#888"/></svg><svg style="position:absolute;left:21px;top:683px;" width="37" height="34" viewBox="0 0 37 34"><rect x="1" y="1" width="35" height="31" fill="#707070" stroke="#d0d0d0" stroke-width="2"/><path d="M2 2 L35 31 M35 2 L2 31" stroke="#1a1a1a" stroke-width="2"/></svg><svg style="position:absolute;left:21px;top:739px;" width="37" height="37" viewBox="0 0 37 37"><circle cx="18.5" cy="18.5" r="17" fill="#707070" stroke="#d0d0d0" stroke-width="2"/><path d="M7 7 L30 30 M30 7 L7 30" stroke="#1a1a2a" stroke-width="2"/></svg><svg style="position:absolute;left:21px;top:801px;" width="37" height="30" viewBox="0 0 37 30"><rect x="1" y="1" width="35" height="28" fill="#e8e8e8"/><rect x="3" y="3" width="31" height="24" fill="#4a8bd6"/><path d="M3 18 L12 12 L22 17 L34 13 V27 H3Z" fill="#1c2a4a"/><circle cx="27" cy="8" r="3.5" fill="#f0b840"/><path d="M8 10 Q12 6 16 10Z" fill="#fff"/></svg><svg style="position:absolute;left:21px;top:858px;" width="37" height="34" viewBox="0 0 37 34"><g fill="#5e9de0"><rect x="1" y="0" width="12" height="15" fill="none" stroke="#5e9de0" stroke-width="2"/><rect x="3" y="4" width="8" height="1.6"/><rect x="3" y="8" width="8" height="1.6"/><rect x="0" y="21" width="12" height="2"/><rect x="0" y="26" width="12" height="2"/><rect x="0" y="31" width="8" height="2"/></g><path d="M17 7 H37 V28 H17 L25 17.5Z" fill="#c8c8c8"/><path d="M21 9 H35 M21 26 H35" stroke="#888" stroke-width="1.2"/></svg><svg style="position:absolute;left:22px;top:932px;" width="36" height="36" viewBox="0 0 36 36"><path d="M8 2 V28 H34 M2 8 H28 V34 M2 34 L34 2" fill="none" stroke="#a0a0a0" stroke-width="3"/></svg><div style="position:absolute;left:23px;top:1013px;width:33px;height:33px;border-radius:50%;background:conic-gradient(from 0deg,#f04040,#f0a030,#e0e040,#40d060,#30c0e0,#3050f0,#a040e0,#f040a0,#f04040);"></div><svg style="position:absolute;left:22px;top:1011px;" width="40" height="40" viewBox="0 0 40 40"><circle cx="18.5" cy="18.5" r="6" fill="#2a2a2a"/><path d="M18.5 18.5 L34 4" stroke="#fff" stroke-width="2"/><circle cx="34" cy="4" r="2.6" fill="#fff"/><circle cx="18.5" cy="18.5" r="2.6" fill="#fff"/></svg><svg style="position:absolute;left:28px;top:1063px;" width="24" height="40" viewBox="0 0 24 40"><path d="M4 2 H20 Q22 14 18 19 Q15 22 12 22 Q9 22 6 19 Q2 14 4 2Z" fill="#d8dcf0" stroke="#8a90b0" stroke-width="1.6"/><path d="M6 10 H18 Q18 18 12 20 Q6 18 6 10Z" fill="#3a4a8a" opacity="0.6"/><rect x="11" y="22" width="2" height="12" fill="#ccd"/><ellipse cx="12" cy="35" rx="8" ry="2.5" fill="#ccd"/></svg><svg style="position:absolute;left:22px;top:1126px;" width="36" height="36" viewBox="0 0 36 36"><path d="M3 33 L6 27 L18 15 L21 18 L9 30Z" fill="#9a9a9a" stroke="#555" stroke-width="1"/><path d="M16 13 L23 20 L26 17 L19 10Z" fill="#3a3a3a"/><path d="M20 12 Q22 2 30 4 Q34 8 24 16Z" fill="#d09a40"/></svg><svg style="position:absolute;left:22px;top:1206px;" width="36" height="38" viewBox="0 0 36 38"><path d="M10 36 Q2 28 3 20 L5 14 Q7 12 9 15 L10 19 V6 Q11 3 13 4 Q15 5 15 7 V16 V3 Q16 0 18 1 Q20 2 20 4 V16 V5 Q21 2 23 3 Q25 4 25 6 V17 V9 Q26 6 28 7 Q30 8 30 10 V24 Q30 32 24 36Z" fill="#f0c8a0" stroke="#b07850" stroke-width="1.2"/></svg><svg style="position:absolute;left:22px;top:1263px;" width="36" height="36" viewBox="0 0 36 36"><circle cx="15" cy="15" r="11" fill="#a8d0f0" stroke="#4a90d8" stroke-width="3"/><path d="M9 12 Q12 8 16 9" stroke="#fff" stroke-width="2" fill="none"/><path d="M23 23 L33 33" stroke="#4a7ab8" stroke-width="5" stroke-linecap="round"/></svg><div style="position:absolute;left:80px;top:220px;width:400px;height:1838px;background:#2e2e2e;"></div><div style="position:absolute;left:80px;top:220px;width:400px;height:44px;background:#2c2c2c;"></div><div style="position:absolute;left:80px;top:263px;width:400px;height:1px;background:#1f1f1f;"></div><div style="position:absolute;left:118px;top:224px;width:72px;height:40px;background:#3b3b3b;"></div><div style="position:absolute;left:80px;top:264px;width:400px;height:4px;background:#3a3a3a;"></div><div style="position:absolute;left:94px;top:234px;width:2px;height:16px;background:#555;"></div><div style="position:absolute;left:100px;top:234px;width:2px;height:16px;background:#555;"></div><div style="position:absolute;left:124px;top:228.5px;height:29px;line-height:29px;font-size:21px;color:#f0f0f0;font-weight:normal;white-space:nowrap;">Pages</div><div style="position:absolute;left:200px;top:228.5px;height:29px;line-height:29px;font-size:21px;color:#8c8c8c;font-weight:normal;white-space:nowrap;">Ass</div><div style="position:absolute;left:253px;top:235px;width:2px;height:22px;background:#555;"></div><div style="position:absolute;left:268px;top:228.5px;height:29px;line-height:29px;font-size:21px;color:#8c8c8c;font-weight:normal;white-space:nowrap;">Sto</div><div style="position:absolute;left:315px;top:235px;width:2px;height:22px;background:#555;"></div><div style="position:absolute;left:330px;top:228.5px;height:29px;line-height:29px;font-size:21px;color:#8c8c8c;font-weight:normal;white-space:nowrap;">FaR</div><div style="position:absolute;left:377px;top:235px;width:2px;height:22px;background:#555;"></div><div style="position:absolute;left:396px;top:228.5px;height:29px;line-height:29px;font-size:21px;color:#8c8c8c;font-weight:normal;white-space:nowrap;">Pfl</div><svg style="position:absolute;left:448px;top:234px;" width="28" height="22" viewBox="0 0 28 22"><g fill="#eee"><rect x="0" y="0" width="18" height="2"/><rect x="0" y="4.5" width="18" height="2"/><rect x="0" y="9" width="18" height="2"/><rect x="0" y="13.5" width="18" height="2"/></g><path d="M19 15 H27 L23 20Z" fill="#eee"/></svg><div style="position:absolute;left:80px;top:268px;width:400px;height:42px;background:#2a2a2a;"></div><svg style="position:absolute;left:98px;top:281.0px;" width="20" height="16" viewBox="0 0 20 16"><path d="M0 0 H20 L10 16Z" fill="#8a8a8a"/></svg><div style="position:absolute;left:128px;top:274.5px;height:29px;line-height:29px;font-size:21px;color:#ececec;font-weight:normal;white-space:nowrap;">Master Pages</div><svg style="position:absolute;left:349px;top:277px;" width="20" height="26" viewBox="0 0 20 26"><rect x="1" y="1" width="18" height="23" fill="none" stroke="#eee" stroke-width="2"/><g fill="#eee"><rect x="4" y="5" width="12" height="2.2"/><rect x="4" y="10" width="12" height="2.2"/><rect x="4" y="15" width="12" height="2.2"/><rect x="4" y="19" width="12" height="2"/></g></svg><svg style="position:absolute;left:394px;top:273px;" width="26" height="30" viewBox="0 0 26 30"><rect x="6" y="1" width="18" height="22" fill="none" stroke="#777" stroke-width="2"/><rect x="1" y="6" width="18" height="23" fill="#2a2a2a" stroke="#777" stroke-width="2"/><g fill="#777"><rect x="4" y="11" width="12" height="2"/><rect x="4" y="16" width="12" height="2"/><rect x="4" y="21" width="12" height="2"/></g></svg><svg style="position:absolute;left:440px;top:276px;" width="20" height="27" viewBox="0 0 20 27"><g fill="#777"><rect x="0" y="4" width="20" height="3"/><rect x="6" y="0" width="8" height="3"/><path d="M2 8 H18 L17 26 H3Z"/></g><g fill="#2a2a2a"><rect x="5.5" y="10" width="2" height="14"/><rect x="9" y="10" width="2" height="14"/><rect x="12.5" y="10" width="2" height="14"/></g></svg><div style="position:absolute;left:158px;top:326px;width:244px;height:176px;background:#fff;box-shadow:0 0 0 1.5px #cfcfcf;"></div><div style="position:absolute;left:-220px;width:1000px;text-align:center;top:515.5px;height:29px;line-height:29px;font-size:21px;color:#ececec;font-weight:normal;white-space:nowrap;">Master A</div><div style="position:absolute;left:80px;top:805px;width:400px;height:45px;background:#2a2a2a;"></div><svg style="position:absolute;left:98px;top:819.5px;" width="20" height="16" viewBox="0 0 20 16"><path d="M0 0 H20 L10 16Z" fill="#8a8a8a"/></svg><div style="position:absolute;left:128px;top:813.0px;height:29px;line-height:29px;font-size:21px;color:#ececec;font-weight:normal;white-space:nowrap;">Pages</div><svg style="position:absolute;left:276px;top:818px;" width="30" height="22" viewBox="0 0 30 22"><g fill="#ddd"><rect x="0" y="1" width="8" height="1.8"/><rect x="0" y="5.5" width="8" height="1.8"/><rect x="0" y="10" width="8" height="1.8"/><rect x="0" y="14.5" width="8" height="1.8"/><rect x="17" y="1" width="12" height="1.8"/><rect x="17" y="5.5" width="12" height="1.8"/><rect x="17" y="10" width="12" height="1.8"/><rect x="17" y="14.5" width="12" height="1.8"/><path d="M9 0 H16 V21 L12.5 17 L9 21Z"/></g></svg><svg style="position:absolute;left:348px;top:815px;" width="21" height="27" viewBox="0 0 21 27"><rect x="1.2" y="1.2" width="18.6" height="24.6" fill="none" stroke="#eee" stroke-width="2.4"/></svg><svg style="position:absolute;left:394px;top:813px;" width="26" height="30" viewBox="0 0 26 30"><rect x="6" y="1" width="18" height="22" fill="none" stroke="#777" stroke-width="2"/><rect x="1" y="6" width="18" height="23" fill="#2a2a2a" stroke="#777" stroke-width="2"/></svg><svg style="position:absolute;left:440px;top:815px;" width="20" height="27" viewBox="0 0 20 27"><g fill="#777"><rect x="0" y="4" width="20" height="3"/><rect x="6" y="0" width="8" height="3"/><path d="M2 8 H18 L17 26 H3Z"/></g><g fill="#2a2a2a"><rect x="5.5" y="10" width="2" height="14"/><rect x="9" y="10" width="2" height="14"/><rect x="12.5" y="10" width="2" height="14"/></g></svg><div style="position:absolute;left:280px;top:864px;width:122px;height:177px;background:#fff;box-shadow:0 0 0 1.5px #cfcfcf;"></div><div style="position:absolute;left:-220px;width:1000px;text-align:center;top:1055.5px;height:29px;line-height:29px;font-size:21px;color:#ececec;font-weight:normal;white-space:nowrap;">Page 1</div><div style="position:absolute;left:150px;top:1111px;width:260px;height:193px;background:#808080;border-radius:12px;"></div><div style="position:absolute;left:-220px;width:1000px;text-align:center;top:1309.5px;height:29px;line-height:29px;font-size:21px;color:#ececec;font-weight:normal;white-space:nowrap;">Pages 2,3</div><div style="position:absolute;left:-220px;width:1000px;text-align:center;top:1564.5px;height:29px;line-height:29px;font-size:21px;color:#ececec;font-weight:normal;white-space:nowrap;">Pages 4,5</div><div style="position:absolute;left:-220px;width:1000px;text-align:center;top:1818.5px;height:29px;line-height:29px;font-size:21px;color:#ececec;font-weight:normal;white-space:nowrap;">Pages 6,7</div><svg style="position:absolute;left:158px;top:1119.5px;" width="244" height="177" viewBox="0 0 244 177"><rect width="244" height="177" fill="#fff"/><svg x="61.8" y="-4.5" width="145" height="188" viewBox="0 0 1275 1651" preserveAspectRatio="none"><use href="#sk" width="1275" height="1651"/></svg><rect x="12.0" y="10.0" width="44.0" height="1.1" fill="#c4c4c4"/><rect x="12.0" y="12.6" width="40.0" height="1.1" fill="#c4c4c4"/><rect x="12.0" y="15.2" width="40.0" height="1.1" fill="#c4c4c4"/><rect x="12.0" y="17.8" width="44.0" height="1.1" fill="#c4c4c4"/><rect x="12.0" y="20.4" width="50.0" height="1.1" fill="#c4c4c4"/><rect x="12.0" y="23.0" width="40.0" height="1.1" fill="#c4c4c4"/><rect x="12.0" y="25.6" width="46.0" height="1.1" fill="#c4c4c4"/><rect x="12.0" y="28.2" width="48.0" height="1.1" fill="#c4c4c4"/><rect x="12.0" y="30.8" width="40.0" height="1.1" fill="#c4c4c4"/><rect x="12.0" y="33.4" width="38.0" height="1.1" fill="#c4c4c4"/><rect x="12.0" y="36.0" width="40.0" height="1.1" fill="#c4c4c4"/><rect x="12.0" y="38.6" width="38.0" height="1.1" fill="#c4c4c4"/><rect x="12.0" y="43.8" width="50.0" height="1.1" fill="#c4c4c4"/><rect x="12.0" y="46.4" width="50.0" height="1.1" fill="#c4c4c4"/><rect x="12.0" y="49.0" width="46.0" height="1.1" fill="#c4c4c4"/><rect x="12.0" y="51.6" width="44.0" height="1.1" fill="#c4c4c4"/><rect x="12.0" y="56.8" width="50.0" height="1.1" fill="#c4c4c4"/><rect x="12.0" y="59.4" width="40.0" height="1.1" fill="#c4c4c4"/><rect x="12.0" y="62.0" width="40.0" height="1.1" fill="#c4c4c4"/><rect x="12.0" y="64.6" width="40.0" height="1.1" fill="#c4c4c4"/><rect x="12.0" y="67.2" width="50.0" height="1.1" fill="#c4c4c4"/><rect x="12.0" y="69.8" width="50.0" height="1.1" fill="#c4c4c4"/><rect x="12.0" y="72.4" width="50.0" height="1.1" fill="#c4c4c4"/><rect x="12.0" y="96.0" width="40.0" height="1.1" fill="#c4c4c4"/><rect x="12.0" y="98.6" width="46.0" height="1.1" fill="#c4c4c4"/><rect x="12.0" y="101.2" width="48.0" height="1.1" fill="#c4c4c4"/><rect x="12.0" y="103.8" width="38.0" height="1.1" fill="#c4c4c4"/><rect x="12.0" y="106.4" width="48.0" height="1.1" fill="#c4c4c4"/><rect x="12.0" y="109.0" width="38.0" height="1.1" fill="#c4c4c4"/><rect x="12.0" y="111.6" width="44.0" height="1.1" fill="#c4c4c4"/><rect x="12.0" y="114.2" width="40.0" height="1.1" fill="#c4c4c4"/><rect x="12.0" y="116.8" width="38.0" height="1.1" fill="#c4c4c4"/><rect x="12.0" y="119.4" width="50.0" height="1.1" fill="#c4c4c4"/><rect x="12.0" y="122.0" width="38.0" height="1.1" fill="#c4c4c4"/><rect x="12.0" y="124.6" width="50.0" height="1.1" fill="#c4c4c4"/><rect x="12.0" y="129.8" width="50.0" height="1.1" fill="#c4c4c4"/><rect x="12.0" y="132.4" width="46.0" height="1.1" fill="#c4c4c4"/><rect x="12.0" y="135.0" width="46.0" height="1.1" fill="#c4c4c4"/><rect x="12.0" y="137.6" width="50.0" height="1.1" fill="#c4c4c4"/><rect x="12.0" y="142.8" width="40.0" height="1.1" fill="#c4c4c4"/><rect x="12.0" y="145.4" width="40.0" height="1.1" fill="#c4c4c4"/><rect x="12.0" y="148.0" width="40.0" height="1.1" fill="#c4c4c4"/><rect x="12.0" y="150.6" width="50.0" height="1.1" fill="#c4c4c4"/><rect x="12.0" y="153.2" width="46.0" height="1.1" fill="#c4c4c4"/><rect x="122.0" y="0.0" width="1.0" height="177" fill="#bbb"/></svg><svg style="position:absolute;left:158px;top:1373.5px;" width="244" height="177" viewBox="0 0 244 177"><rect width="244" height="177" fill="#fff"/><path d="M36 7 Q40 4 44 8 M46 8 H120" stroke="#555" stroke-width="0.9" fill="none"/><rect x="11" y="12.0" width="28" height="21" fill="none" stroke="#666" stroke-width="0.9"/><path d="M14 24.0 Q25 18.0 36 26.0" stroke="#888" stroke-width="0.7" fill="none"/><path d="M46 24.0 h34" stroke="#777" stroke-width="1" stroke-dasharray="4 2 6 2"/><rect x="11" y="39.5" width="28" height="21" fill="none" stroke="#666" stroke-width="0.9"/><path d="M14 51.5 Q25 45.5 36 53.5" stroke="#888" stroke-width="0.7" fill="none"/><path d="M46 51.5 h34" stroke="#777" stroke-width="1" stroke-dasharray="4 2 6 2"/><rect x="11" y="67.0" width="28" height="21" fill="none" stroke="#666" stroke-width="0.9"/><path d="M14 79.0 Q25 73.0 36 81.0" stroke="#888" stroke-width="0.7" fill="none"/><path d="M46 79.0 h46" stroke="#777" stroke-width="1" stroke-dasharray="4 2 6 2"/><rect x="11" y="94.5" width="28" height="21" fill="none" stroke="#666" stroke-width="0.9"/><path d="M14 106.5 Q25 100.5 36 108.5" stroke="#888" stroke-width="0.7" fill="none"/><path d="M46 106.5 h60" stroke="#777" stroke-width="1" stroke-dasharray="4 2 6 2"/><rect x="11" y="122.0" width="28" height="21" fill="none" stroke="#666" stroke-width="0.9"/><path d="M14 134.0 Q25 128.0 36 136.0" stroke="#888" stroke-width="0.7" fill="none"/><path d="M46 134.0 h46" stroke="#777" stroke-width="1" stroke-dasharray="4 2 6 2"/><rect x="11" y="149.5" width="28" height="21" fill="none" stroke="#666" stroke-width="0.9"/><path d="M14 161.5 Q25 155.5 36 163.5" stroke="#888" stroke-width="0.7" fill="none"/><path d="M46 161.5 h52" stroke="#777" stroke-width="1" stroke-dasharray="4 2 6 2"/><rect x="135" y="12.0" width="28" height="21" fill="none" stroke="#666" stroke-width="0.9"/><path d="M138 24.0 Q149 18.0 160 26.0" stroke="#888" stroke-width="0.7" fill="none"/><path d="M168 24.0 h60" stroke="#777" stroke-width="1" stroke-dasharray="4 2 6 2"/><rect x="135" y="39.5" width="28" height="21" fill="none" stroke="#666" stroke-width="0.9"/><path d="M138 51.5 Q149 45.5 160 53.5" stroke="#888" stroke-width="0.7" fill="none"/><path d="M168 51.5 h52" stroke="#777" stroke-width="1" stroke-dasharray="4 2 6 2"/><rect x="135" y="67.0" width="28" height="21" fill="none" stroke="#666" stroke-width="0.9"/><path d="M138 79.0 Q149 73.0 160 81.0" stroke="#888" stroke-width="0.7" fill="none"/><path d="M168 79.0 h60" stroke="#777" stroke-width="1" stroke-dasharray="4 2 6 2"/><rect x="135" y="94.5" width="28" height="21" fill="none" stroke="#666" stroke-width="0.9"/><path d="M138 106.5 Q149 100.5 160 108.5" stroke="#888" stroke-width="0.7" fill="none"/><path d="M168 106.5 h40" stroke="#777" stroke-width="1" stroke-dasharray="4 2 6 2"/><rect x="135" y="122.0" width="28" height="21" fill="none" stroke="#666" stroke-width="0.9"/><path d="M138 134.0 Q149 128.0 160 136.0" stroke="#888" stroke-width="0.7" fill="none"/><path d="M168 134.0 h60" stroke="#777" stroke-width="1" stroke-dasharray="4 2 6 2"/><rect x="135" y="149.5" width="28" height="21" fill="none" stroke="#666" stroke-width="0.9"/><path d="M138 161.5 Q149 155.5 160 163.5" stroke="#888" stroke-width="0.7" fill="none"/><path d="M168 161.5 h40" stroke="#777" stroke-width="1" stroke-dasharray="4 2 6 2"/></svg><svg style="position:absolute;left:158px;top:1629.6px;" width="244" height="176" viewBox="0 0 244 176"><rect width="244" height="176" fill="#fff"/><defs><clipPath id="pcl"><rect x="122" y="11" width="114.5" height="155"/></clipPath><linearGradient id="pnk" x1="0" y1="0" x2="0" y2="1"><stop offset="0" stop-color="#f2c8c0"/><stop offset="1" stop-color="#e09088"/></linearGradient><radialGradient id="pcirc" cx="50%" cy="50%" r="50%"><stop offset="0" stop-color="#c8a8a0"/><stop offset="0.6" stop-color="#d8b8b8"/><stop offset="1" stop-color="#e8c8c8"/></radialGradient></defs><g clip-path="url(#pcl)"><rect x="122" y="11" width="114.5" height="155" fill="url(#pnk)"/><circle cx="150" cy="38" r="48" fill="#d85848"/><circle cx="140" cy="75" r="40" fill="#d86a58" opacity="0.6"/><circle cx="232" cy="120" r="38" fill="#e89070" opacity="0.7"/><circle cx="164" cy="118" r="45" fill="url(#pcirc)"/><circle cx="225" cy="168" r="25" fill="#e07060" opacity="0.8"/><path d="M193 34 L200 30 L218 108 L210 112Z" fill="#8a9088"/><circle cx="207" cy="124" r="11.5" fill="#e08838"/></g><path d="M19 41.5 h46" stroke="#555" stroke-width="1.2" stroke-dasharray="4 1.5 7 1.5 3 1.5"/><path d="M19 47.5 h18" stroke="#555" stroke-width="1.2" stroke-dasharray="4 1.5 7 1.5 3 1.5"/><path d="M19 56 h54" stroke="#555" stroke-width="1.2" stroke-dasharray="4 1.5 7 1.5 3 1.5"/><path d="M19 61.5 h30" stroke="#555" stroke-width="1.2" stroke-dasharray="4 1.5 7 1.5 3 1.5"/><path d="M19 69 h52" stroke="#555" stroke-width="1.2" stroke-dasharray="4 1.5 7 1.5 3 1.5"/><path d="M19 75.5 h64" stroke="#555" stroke-width="1.2" stroke-dasharray="4 1.5 7 1.5 3 1.5"/><path d="M19 81.5 h36" stroke="#555" stroke-width="1.2" stroke-dasharray="4 1.5 7 1.5 3 1.5"/><path d="M20 90 h40" stroke="#555" stroke-width="1.2" stroke-dasharray="4 1.5 7 1.5 3 1.5"/><rect x="0" y="0" width="244" height="176" fill="none" stroke="#cfcfcf" stroke-width="1.5"/></svg><svg style="position:absolute;left:158px;top:1884px;" width="244" height="174" viewBox="0 0 244 174"><rect width="244" height="174" fill="#fff"/><rect x="12.0" y="8.0" width="82.0" height="1.5" fill="#666"/><rect x="12.0" y="13.5" width="42.0" height="1.5" fill="#666"/><rect x="138.0" y="8.0" width="82.0" height="1.5" fill="#666"/><rect x="138.0" y="13.5" width="42.0" height="1.5" fill="#666"/><rect x="39.6" y="23.0" width="10.8" height="1.1" fill="#aaa"/><rect x="159.7" y="23.0" width="10.2" height="1.1" fill="#aaa"/><rect x="39.6" y="26.7" width="19.8" height="1.1" fill="#aaa"/><rect x="159.7" y="26.7" width="18.7" height="1.1" fill="#aaa"/><rect x="37.8" y="30.4" width="18.0" height="1.1" fill="#aaa"/><rect x="158.2" y="30.4" width="17.0" height="1.1" fill="#aaa"/><rect x="37.8" y="34.1" width="19.8" height="1.1" fill="#aaa"/><rect x="158.2" y="34.1" width="18.7" height="1.1" fill="#aaa"/><rect x="39.6" y="37.8" width="18.0" height="1.1" fill="#aaa"/><rect x="159.7" y="37.8" width="17.0" height="1.1" fill="#aaa"/><rect x="39.6" y="41.5" width="19.8" height="1.1" fill="#aaa"/><rect x="159.7" y="41.5" width="18.7" height="1.1" fill="#aaa"/><rect x="39.6" y="45.2" width="19.8" height="1.1" fill="#aaa"/><rect x="159.7" y="45.2" width="18.7" height="1.1" fill="#aaa"/><rect x="42.3" y="53.9" width="45.0" height="1.1" fill="#aaa"/><rect x="161.8" y="53.9" width="42.5" height="1.1" fill="#aaa"/><rect x="42.3" y="57.6" width="45.0" height="1.1" fill="#aaa"/><rect x="161.8" y="57.6" width="42.5" height="1.1" fill="#aaa"/><rect x="45.0" y="61.3" width="45.0" height="1.1" fill="#aaa"/><rect x="164.0" y="61.3" width="42.5" height="1.1" fill="#aaa"/><rect x="46.8" y="65.0" width="41.4" height="1.1" fill="#aaa"/><rect x="165.4" y="65.0" width="39.1" height="1.1" fill="#aaa"/><rect x="48.6" y="68.7" width="39.6" height="1.1" fill="#aaa"/><rect x="166.9" y="68.7" width="37.4" height="1.1" fill="#aaa"/><rect x="50.4" y="72.4" width="36.0" height="1.1" fill="#aaa"/><rect x="168.3" y="72.4" width="34.0" height="1.1" fill="#aaa"/><rect x="52.2" y="81.1" width="40.5" height="1.1" fill="#aaa"/><rect x="169.8" y="81.1" width="38.2" height="1.1" fill="#aaa"/><rect x="54.0" y="84.8" width="39.6" height="1.1" fill="#aaa"/><rect x="171.2" y="84.8" width="37.4" height="1.1" fill="#aaa"/><rect x="55.8" y="88.5" width="39.6" height="1.1" fill="#aaa"/><rect x="172.6" y="88.5" width="37.4" height="1.1" fill="#aaa"/><rect x="57.6" y="92.2" width="39.6" height="1.1" fill="#aaa"/><rect x="186.1" y="92.2" width="37.4" height="1.1" fill="#aaa"/><rect x="59.4" y="95.9" width="39.6" height="1.1" fill="#aaa"/><rect x="187.5" y="95.9" width="37.4" height="1.1" fill="#aaa"/><rect x="61.2" y="99.6" width="36.0" height="1.1" fill="#aaa"/><rect x="189.0" y="99.6" width="34.0" height="1.1" fill="#aaa"/><rect x="63.0" y="103.3" width="34.2" height="1.1" fill="#aaa"/><rect x="190.4" y="103.3" width="32.3" height="1.1" fill="#aaa"/><rect x="63.0" y="112.0" width="14.4" height="1.1" fill="#aaa"/><rect x="190.4" y="112.0" width="13.6" height="1.1" fill="#aaa"/><rect x="59.4" y="115.7" width="19.8" height="1.1" fill="#aaa"/><rect x="187.5" y="115.7" width="18.7" height="1.1" fill="#aaa"/><rect x="54.0" y="119.4" width="21.6" height="1.1" fill="#aaa"/><rect x="183.2" y="119.4" width="20.4" height="1.1" fill="#aaa"/><rect x="50.4" y="123.1" width="27.0" height="1.1" fill="#aaa"/><rect x="180.3" y="123.1" width="25.5" height="1.1" fill="#aaa"/><rect x="46.8" y="126.8" width="30.6" height="1.1" fill="#aaa"/><rect x="177.4" y="126.8" width="28.9" height="1.1" fill="#aaa"/><rect x="43.2" y="130.5" width="34.2" height="1.1" fill="#aaa"/><rect x="174.6" y="130.5" width="32.3" height="1.1" fill="#aaa"/><rect x="39.6" y="134.2" width="36.0" height="1.1" fill="#aaa"/><rect x="171.7" y="134.2" width="34.0" height="1.1" fill="#aaa"/><rect x="37.8" y="137.9" width="39.6" height="1.1" fill="#aaa"/><rect x="170.2" y="137.9" width="37.4" height="1.1" fill="#aaa"/><rect x="36.0" y="141.6" width="41.4" height="1.1" fill="#aaa"/><rect x="168.8" y="141.6" width="39.1" height="1.1" fill="#aaa"/><rect x="34.2" y="145.3" width="43.2" height="1.1" fill="#aaa"/><rect x="167.4" y="145.3" width="40.8" height="1.1" fill="#aaa"/><rect x="32.4" y="149.0" width="45.0" height="1.1" fill="#aaa"/><rect x="165.9" y="149.0" width="42.5" height="1.1" fill="#aaa"/><rect x="30.6" y="152.7" width="46.8" height="1.1" fill="#aaa"/><rect x="164.5" y="152.7" width="44.2" height="1.1" fill="#aaa"/><rect x="28.8" y="156.4" width="48.6" height="1.1" fill="#aaa"/><rect x="163.0" y="156.4" width="45.9" height="1.1" fill="#aaa"/><rect x="27.0" y="160.1" width="50.4" height="1.1" fill="#aaa"/><rect x="161.6" y="160.1" width="47.6" height="1.1" fill="#aaa"/><rect x="25.2" y="163.8" width="52.2" height="1.1" fill="#aaa"/><rect x="160.2" y="163.8" width="49.3" height="1.1" fill="#aaa"/><rect x="23.4" y="167.5" width="46.8" height="1.1" fill="#aaa"/><rect x="158.7" y="167.5" width="44.2" height="1.1" fill="#aaa"/></svg><div style="position:absolute;left:484px;top:220px;width:2344px;height:40px;background:#3a3a3a;"></div><div style="position:absolute;left:484px;top:260px;width:40px;height:1798px;background:#3a3a3a;"></div><div style="position:absolute;left:488px;top:230.5px;height:25px;line-height:25px;font-size:18px;color:#c8c8c8;font-weight:normal;white-space:nowrap;">mm</div><svg style="position:absolute;left:524px;top:220px;" width="2304" height="40" viewBox="0 0 2304 40"><g fill="#d0d0d0"><rect x="7.8" y="36" width="1.8" height="4"/><rect x="17.0" y="32" width="1.8" height="8"/><rect x="26.2" y="36" width="1.8" height="4"/><rect x="35.4" y="32" width="1.8" height="8"/><rect x="44.6" y="36" width="1.8" height="4"/><rect x="53.8" y="32" width="1.8" height="8"/><rect x="63.0" y="36" width="1.8" height="4"/><rect x="72.2" y="24" width="1.8" height="16"/><rect x="81.4" y="36" width="1.8" height="4"/><rect x="90.6" y="32" width="1.8" height="8"/><rect x="99.8" y="36" width="1.8" height="4"/><rect x="109.0" y="32" width="1.8" height="8"/><rect x="118.2" y="36" width="1.8" height="4"/><rect x="127.4" y="32" width="1.8" height="8"/><rect x="136.6" y="36" width="1.8" height="4"/><rect x="145.8" y="32" width="1.8" height="8"/><rect x="155.0" y="36" width="1.8" height="4"/><rect x="164.2" y="24" width="1.8" height="16"/><rect x="173.4" y="36" width="1.8" height="4"/><rect x="182.6" y="32" width="1.8" height="8"/><rect x="191.8" y="36" width="1.8" height="4"/><rect x="201.0" y="32" width="1.8" height="8"/><rect x="210.2" y="36" width="1.8" height="4"/><rect x="219.4" y="32" width="1.8" height="8"/><rect x="228.6" y="36" width="1.8" height="4"/><rect x="237.8" y="32" width="1.8" height="8"/><rect x="247.0" y="36" width="1.8" height="4"/><rect x="256.2" y="24" width="1.8" height="16"/><rect x="265.4" y="36" width="1.8" height="4"/><rect x="274.6" y="32" width="1.8" height="8"/><rect x="283.8" y="36" width="1.8" height="4"/><rect x="293.0" y="32" width="1.8" height="8"/><rect x="302.2" y="36" width="1.8" height="4"/><rect x="311.4" y="32" width="1.8" height="8"/><rect x="320.6" y="36" width="1.8" height="4"/><rect x="329.8" y="32" width="1.8" height="8"/><rect x="339.0" y="36" width="1.8" height="4"/><rect x="348.2" y="24" width="1.8" height="16"/><rect x="357.4" y="36" width="1.8" height="4"/><rect x="366.6" y="32" width="1.8" height="8"/><rect x="375.8" y="36" width="1.8" height="4"/><rect x="385.0" y="32" width="1.8" height="8"/><rect x="394.2" y="36" width="1.8" height="4"/><rect x="403.4" y="32" width="1.8" height="8"/><rect x="412.6" y="36" width="1.8" height="4"/><rect x="421.8" y="32" width="1.8" height="8"/><rect x="431.0" y="36" width="1.8" height="4"/><rect x="440.2" y="24" width="1.8" height="16"/><rect x="449.4" y="36" width="1.8" height="4"/><rect x="458.6" y="32" width="1.8" height="8"/><rect x="467.8" y="36" width="1.8" height="4"/><rect x="477.0" y="32" width="1.8" height="8"/><rect x="486.2" y="36" width="1.8" height="4"/><rect x="495.4" y="32" width="1.8" height="8"/><rect x="504.6" y="36" width="1.8" height="4"/><rect x="513.8" y="32" width="1.8" height="8"/><rect x="523.0" y="36" width="1.8" height="4"/><rect x="532.2" y="24" width="1.8" height="16"/><rect x="541.4" y="36" width="1.8" height="4"/><rect x="550.6" y="32" width="1.8" height="8"/><rect x="559.8" y="36" width="1.8" height="4"/><rect x="569.0" y="32" width="1.8" height="8"/><rect x="578.2" y="36" width="1.8" height="4"/><rect x="587.4" y="32" width="1.8" height="8"/><rect x="596.6" y="36" width="1.8" height="4"/><rect x="605.8" y="32" width="1.8" height="8"/><rect x="615.0" y="36" width="1.8" height="4"/><rect x="624.2" y="24" width="1.8" height="16"/><rect x="633.4" y="36" width="1.8" height="4"/><rect x="642.6" y="32" width="1.8" height="8"/><rect x="651.8" y="36" width="1.8" height="4"/><rect x="661.0" y="32" width="1.8" height="8"/><rect x="670.2" y="36" width="1.8" height="4"/><rect x="679.4" y="32" width="1.8" height="8"/><rect x="688.6" y="36" width="1.8" height="4"/><rect x="697.8" y="32" width="1.8" height="8"/><rect x="707.0" y="36" width="1.8" height="4"/><rect x="716.2" y="24" width="1.8" height="16"/><rect x="725.4" y="36" width="1.8" height="4"/><rect x="734.6" y="32" width="1.8" height="8"/><rect x="743.8" y="36" width="1.8" height="4"/><rect x="753.0" y="32" width="1.8" height="8"/><rect x="762.2" y="36" width="1.8" height="4"/><rect x="771.4" y="32" width="1.8" height="8"/><rect x="780.6" y="36" width="1.8" height="4"/><rect x="789.8" y="32" width="1.8" height="8"/><rect x="799.0" y="36" width="1.8" height="4"/><rect x="808.2" y="24" width="1.8" height="16"/><rect x="817.4" y="36" width="1.8" height="4"/><rect x="826.6" y="32" width="1.8" height="8"/><rect x="835.8" y="36" width="1.8" height="4"/><rect x="845.0" y="32" width="1.8" height="8"/><rect x="854.2" y="36" width="1.8" height="4"/><rect x="863.4" y="32" width="1.8" height="8"/><rect x="872.6" y="36" width="1.8" height="4"/><rect x="881.8" y="32" width="1.8" height="8"/><rect x="891.0" y="36" width="1.8" height="4"/><rect x="900.2" y="24" width="1.8" height="16"/><rect x="909.4" y="36" width="1.8" height="4"/><rect x="918.6" y="32" width="1.8" height="8"/><rect x="927.8" y="36" width="1.8" height="4"/><rect x="937.0" y="32" width="1.8" height="8"/><rect x="946.2" y="36" width="1.8" height="4"/><rect x="955.4" y="32" width="1.8" height="8"/><rect x="964.6" y="36" width="1.8" height="4"/><rect x="973.8" y="32" width="1.8" height="8"/><rect x="983.0" y="36" width="1.8" height="4"/><rect x="992.2" y="24" width="1.8" height="16"/><rect x="1001.4" y="36" width="1.8" height="4"/><rect x="1010.6" y="32" width="1.8" height="8"/><rect x="1019.8" y="36" width="1.8" height="4"/><rect x="1029.0" y="32" width="1.8" height="8"/><rect x="1038.2" y="36" width="1.8" height="4"/><rect x="1047.4" y="32" width="1.8" height="8"/><rect x="1056.6" y="36" width="1.8" height="4"/><rect x="1065.8" y="32" width="1.8" height="8"/><rect x="1075.0" y="36" width="1.8" height="4"/><rect x="1084.2" y="24" width="1.8" height="16"/><rect x="1093.4" y="36" width="1.8" height="4"/><rect x="1102.6" y="32" width="1.8" height="8"/><rect x="1111.8" y="36" width="1.8" height="4"/><rect x="1121.0" y="32" width="1.8" height="8"/><rect x="1130.2" y="36" width="1.8" height="4"/><rect x="1139.4" y="32" width="1.8" height="8"/><rect x="1148.6" y="36" width="1.8" height="4"/><rect x="1157.8" y="32" width="1.8" height="8"/><rect x="1167.0" y="36" width="1.8" height="4"/><rect x="1176.2" y="24" width="1.8" height="16"/><rect x="1185.4" y="36" width="1.8" height="4"/><rect x="1194.6" y="32" width="1.8" height="8"/><rect x="1203.8" y="36" width="1.8" height="4"/><rect x="1213.0" y="32" width="1.8" height="8"/><rect x="1222.2" y="36" width="1.8" height="4"/><rect x="1231.4" y="32" width="1.8" height="8"/><rect x="1240.6" y="36" width="1.8" height="4"/><rect x="1249.8" y="32" width="1.8" height="8"/><rect x="1259.0" y="36" width="1.8" height="4"/><rect x="1268.2" y="24" width="1.8" height="16"/><rect x="1277.4" y="36" width="1.8" height="4"/><rect x="1286.6" y="32" width="1.8" height="8"/><rect x="1295.8" y="36" width="1.8" height="4"/><rect x="1305.0" y="32" width="1.8" height="8"/><rect x="1314.2" y="36" width="1.8" height="4"/><rect x="1323.4" y="32" width="1.8" height="8"/><rect x="1332.6" y="36" width="1.8" height="4"/><rect x="1341.8" y="32" width="1.8" height="8"/><rect x="1351.0" y="36" width="1.8" height="4"/><rect x="1360.2" y="24" width="1.8" height="16"/><rect x="1369.4" y="36" width="1.8" height="4"/><rect x="1378.6" y="32" width="1.8" height="8"/><rect x="1387.8" y="36" width="1.8" height="4"/><rect x="1397.0" y="32" width="1.8" height="8"/><rect x="1406.2" y="36" width="1.8" height="4"/><rect x="1415.4" y="32" width="1.8" height="8"/><rect x="1424.6" y="36" width="1.8" height="4"/><rect x="1433.8" y="32" width="1.8" height="8"/><rect x="1443.0" y="36" width="1.8" height="4"/><rect x="1452.2" y="24" width="1.8" height="16"/><rect x="1461.4" y="36" width="1.8" height="4"/><rect x="1470.6" y="32" width="1.8" height="8"/><rect x="1479.8" y="36" width="1.8" height="4"/><rect x="1489.0" y="32" width="1.8" height="8"/><rect x="1498.2" y="36" width="1.8" height="4"/><rect x="1507.4" y="32" width="1.8" height="8"/><rect x="1516.6" y="36" width="1.8" height="4"/><rect x="1525.8" y="32" width="1.8" height="8"/><rect x="1535.0" y="36" width="1.8" height="4"/><rect x="1544.2" y="24" width="1.8" height="16"/><rect x="1553.4" y="36" width="1.8" height="4"/><rect x="1562.6" y="32" width="1.8" height="8"/><rect x="1571.8" y="36" width="1.8" height="4"/><rect x="1581.0" y="32" width="1.8" height="8"/><rect x="1590.2" y="36" width="1.8" height="4"/><rect x="1599.4" y="32" width="1.8" height="8"/><rect x="1608.6" y="36" width="1.8" height="4"/><rect x="1617.8" y="32" width="1.8" height="8"/><rect x="1627.0" y="36" width="1.8" height="4"/><rect x="1636.2" y="24" width="1.8" height="16"/><rect x="1645.4" y="36" width="1.8" height="4"/><rect x="1654.6" y="32" width="1.8" height="8"/><rect x="1663.8" y="36" width="1.8" height="4"/><rect x="1673.0" y="32" width="1.8" height="8"/><rect x="1682.2" y="36" width="1.8" height="4"/><rect x="1691.4" y="32" width="1.8" height="8"/><rect x="1700.6" y="36" width="1.8" height="4"/><rect x="1709.8" y="32" width="1.8" height="8"/><rect x="1719.0" y="36" width="1.8" height="4"/><rect x="1728.2" y="24" width="1.8" height="16"/><rect x="1737.4" y="36" width="1.8" height="4"/><rect x="1746.6" y="32" width="1.8" height="8"/><rect x="1755.8" y="36" width="1.8" height="4"/><rect x="1765.0" y="32" width="1.8" height="8"/><rect x="1774.2" y="36" width="1.8" height="4"/><rect x="1783.4" y="32" width="1.8" height="8"/><rect x="1792.6" y="36" width="1.8" height="4"/><rect x="1801.8" y="32" width="1.8" height="8"/><rect x="1811.0" y="36" width="1.8" height="4"/><rect x="1820.2" y="24" width="1.8" height="16"/><rect x="1829.4" y="36" width="1.8" height="4"/><rect x="1838.6" y="32" width="1.8" height="8"/><rect x="1847.8" y="36" width="1.8" height="4"/><rect x="1857.0" y="32" width="1.8" height="8"/><rect x="1866.2" y="36" width="1.8" height="4"/><rect x="1875.4" y="32" width="1.8" height="8"/><rect x="1884.6" y="36" width="1.8" height="4"/><rect x="1893.8" y="32" width="1.8" height="8"/><rect x="1903.0" y="36" width="1.8" height="4"/><rect x="1912.2" y="24" width="1.8" height="16"/><rect x="1921.4" y="36" width="1.8" height="4"/><rect x="1930.6" y="32" width="1.8" height="8"/><rect x="1939.8" y="36" width="1.8" height="4"/><rect x="1949.0" y="32" width="1.8" height="8"/><rect x="1958.2" y="36" width="1.8" height="4"/><rect x="1967.4" y="32" width="1.8" height="8"/><rect x="1976.6" y="36" width="1.8" height="4"/><rect x="1985.8" y="32" width="1.8" height="8"/><rect x="1995.0" y="36" width="1.8" height="4"/><rect x="2004.2" y="24" width="1.8" height="16"/><rect x="2013.4" y="36" width="1.8" height="4"/><rect x="2022.6" y="32" width="1.8" height="8"/><rect x="2031.8" y="36" width="1.8" height="4"/><rect x="2041.0" y="32" width="1.8" height="8"/><rect x="2050.2" y="36" width="1.8" height="4"/><rect x="2059.4" y="32" width="1.8" height="8"/><rect x="2068.6" y="36" width="1.8" height="4"/><rect x="2077.8" y="32" width="1.8" height="8"/><rect x="2087.0" y="36" width="1.8" height="4"/><rect x="2096.2" y="24" width="1.8" height="16"/><rect x="2105.4" y="36" width="1.8" height="4"/><rect x="2114.6" y="32" width="1.8" height="8"/><rect x="2123.8" y="36" width="1.8" height="4"/><rect x="2133.0" y="32" width="1.8" height="8"/><rect x="2142.2" y="36" width="1.8" height="4"/><rect x="2151.4" y="32" width="1.8" height="8"/><rect x="2160.6" y="36" width="1.8" height="4"/><rect x="2169.8" y="32" width="1.8" height="8"/><rect x="2179.0" y="36" width="1.8" height="4"/><rect x="2188.2" y="24" width="1.8" height="16"/><rect x="2197.4" y="36" width="1.8" height="4"/><rect x="2206.6" y="32" width="1.8" height="8"/><rect x="2215.8" y="36" width="1.8" height="4"/><rect x="2225.0" y="32" width="1.8" height="8"/><rect x="2234.2" y="36" width="1.8" height="4"/><rect x="2243.4" y="32" width="1.8" height="8"/><rect x="2252.6" y="36" width="1.8" height="4"/><rect x="2261.8" y="32" width="1.8" height="8"/><rect x="2271.0" y="36" width="1.8" height="4"/><rect x="2280.2" y="24" width="1.8" height="16"/><rect x="2289.4" y="36" width="1.8" height="4"/><rect x="2298.6" y="32" width="1.8" height="8"/></g><g fill="#c8c8c8" font-family="Liberation Sans" font-size="18"><text x="73.1" y="20" text-anchor="middle">-40</text><text x="165.1" y="20" text-anchor="middle">-20</text><text x="257.1" y="20" text-anchor="middle">0</text><text x="349.1" y="20" text-anchor="middle">20</text><text x="441.1" y="20" text-anchor="middle">40</text><text x="533.1" y="20" text-anchor="middle">60</text><text x="625.1" y="20" text-anchor="middle">80</text><text x="717.1" y="20" text-anchor="middle">100</text><text x="809.1" y="20" text-anchor="middle">120</text><text x="901.1" y="20" text-anchor="middle">140</text><text x="993.1" y="20" text-anchor="middle">160</text><text x="1085.1" y="20" text-anchor="middle">180</text><text x="1177.1" y="20" text-anchor="middle">200</text><text x="1269.1" y="20" text-anchor="middle">220</text><text x="1361.1" y="20" text-anchor="middle">240</text><text x="1453.1" y="20" text-anchor="middle">260</text><text x="1545.1" y="20" text-anchor="middle">280</text><text x="1637.1" y="20" text-anchor="middle">300</text><text x="1729.1" y="20" text-anchor="middle">320</text><text x="1821.1" y="20" text-anchor="middle">340</text><text x="1913.1" y="20" text-anchor="middle">360</text><text x="2005.1" y="20" text-anchor="middle">380</text><text x="2097.1" y="20" text-anchor="middle">400</text><text x="2189.1" y="20" text-anchor="middle">420</text><text x="2281.1" y="20" text-anchor="middle">440</text></g></svg><div style="position:absolute;left:1837px;top:220px;width:991px;height:2px;background:#7a3a3a;"></div><div style="position:absolute;left:2680px;top:220px;width:2px;height:40px;background:#e6e6e6;"></div><svg style="position:absolute;left:484px;top:260px;" width="40" height="1798" viewBox="0 0 40 1798"><g fill="#d0d0d0"><rect x="36" y="1.3" width="4" height="1.8"/><rect x="32" y="10.5" width="8" height="1.8"/><rect x="36" y="19.7" width="4" height="1.8"/><rect x="32" y="28.9" width="8" height="1.8"/><rect x="36" y="38.1" width="4" height="1.8"/><rect x="32" y="47.3" width="8" height="1.8"/><rect x="36" y="56.5" width="4" height="1.8"/><rect x="32" y="65.7" width="8" height="1.8"/><rect x="36" y="74.9" width="4" height="1.8"/><rect x="24" y="84.1" width="16" height="1.8"/><rect x="36" y="93.3" width="4" height="1.8"/><rect x="32" y="102.5" width="8" height="1.8"/><rect x="36" y="111.7" width="4" height="1.8"/><rect x="32" y="120.9" width="8" height="1.8"/><rect x="36" y="130.1" width="4" height="1.8"/><rect x="32" y="139.3" width="8" height="1.8"/><rect x="36" y="148.5" width="4" height="1.8"/><rect x="32" y="157.7" width="8" height="1.8"/><rect x="36" y="166.9" width="4" height="1.8"/><rect x="24" y="176.1" width="16" height="1.8"/><rect x="36" y="185.3" width="4" height="1.8"/><rect x="32" y="194.5" width="8" height="1.8"/><rect x="36" y="203.7" width="4" height="1.8"/><rect x="32" y="212.9" width="8" height="1.8"/><rect x="36" y="222.1" width="4" height="1.8"/><rect x="32" y="231.3" width="8" height="1.8"/><rect x="36" y="240.5" width="4" height="1.8"/><rect x="32" y="249.7" width="8" height="1.8"/><rect x="36" y="258.9" width="4" height="1.8"/><rect x="24" y="268.1" width="16" height="1.8"/><rect x="36" y="277.3" width="4" height="1.8"/><rect x="32" y="286.5" width="8" height="1.8"/><rect x="36" y="295.7" width="4" height="1.8"/><rect x="32" y="304.9" width="8" height="1.8"/><rect x="36" y="314.1" width="4" height="1.8"/><rect x="32" y="323.3" width="8" height="1.8"/><rect x="36" y="332.5" width="4" height="1.8"/><rect x="32" y="341.7" width="8" height="1.8"/><rect x="36" y="350.9" width="4" height="1.8"/><rect x="24" y="360.1" width="16" height="1.8"/><rect x="36" y="369.3" width="4" height="1.8"/><rect x="32" y="378.5" width="8" height="1.8"/><rect x="36" y="387.7" width="4" height="1.8"/><rect x="32" y="396.9" width="8" height="1.8"/><rect x="36" y="406.1" width="4" height="1.8"/><rect x="32" y="415.3" width="8" height="1.8"/><rect x="36" y="424.5" width="4" height="1.8"/><rect x="32" y="433.7" width="8" height="1.8"/><rect x="36" y="442.9" width="4" height="1.8"/><rect x="24" y="452.1" width="16" height="1.8"/><rect x="36" y="461.3" width="4" height="1.8"/><rect x="32" y="470.5" width="8" height="1.8"/><rect x="36" y="479.7" width="4" height="1.8"/><rect x="32" y="488.9" width="8" height="1.8"/><rect x="36" y="498.1" width="4" height="1.8"/><rect x="32" y="507.3" width="8" height="1.8"/><rect x="36" y="516.5" width="4" height="1.8"/><rect x="32" y="525.7" width="8" height="1.8"/><rect x="36" y="534.9" width="4" height="1.8"/><rect x="24" y="544.1" width="16" height="1.8"/><rect x="36" y="553.3" width="4" height="1.8"/><rect x="32" y="562.5" width="8" height="1.8"/><rect x="36" y="571.7" width="4" height="1.8"/><rect x="32" y="580.9" width="8" height="1.8"/><rect x="36" y="590.1" width="4" height="1.8"/><rect x="32" y="599.3" width="8" height="1.8"/><rect x="36" y="608.5" width="4" height="1.8"/><rect x="32" y="617.7" width="8" height="1.8"/><rect x="36" y="626.9" width="4" height="1.8"/><rect x="24" y="636.1" width="16" height="1.8"/><rect x="36" y="645.3" width="4" height="1.8"/><rect x="32" y="654.5" width="8" height="1.8"/><rect x="36" y="663.7" width="4" height="1.8"/><rect x="32" y="672.9" width="8" height="1.8"/><rect x="36" y="682.1" width="4" height="1.8"/><rect x="32" y="691.3" width="8" height="1.8"/><rect x="36" y="700.5" width="4" height="1.8"/><rect x="32" y="709.7" width="8" height="1.8"/><rect x="36" y="718.9" width="4" height="1.8"/><rect x="24" y="728.1" width="16" height="1.8"/><rect x="36" y="737.3" width="4" height="1.8"/><rect x="32" y="746.5" width="8" height="1.8"/><rect x="36" y="755.7" width="4" height="1.8"/><rect x="32" y="764.9" width="8" height="1.8"/><rect x="36" y="774.1" width="4" height="1.8"/><rect x="32" y="783.3" width="8" height="1.8"/><rect x="36" y="792.5" width="4" height="1.8"/><rect x="32" y="801.7" width="8" height="1.8"/><rect x="36" y="810.9" width="4" height="1.8"/><rect x="24" y="820.1" width="16" height="1.8"/><rect x="36" y="829.3" width="4" height="1.8"/><rect x="32" y="838.5" width="8" height="1.8"/><rect x="36" y="847.7" width="4" height="1.8"/><rect x="32" y="856.9" width="8" height="1.8"/><rect x="36" y="866.1" width="4" height="1.8"/><rect x="32" y="875.3" width="8" height="1.8"/><rect x="36" y="884.5" width="4" height="1.8"/><rect x="32" y="893.7" width="8" height="1.8"/><rect x="36" y="902.9" width="4" height="1.8"/><rect x="24" y="912.1" width="16" height="1.8"/><rect x="36" y="921.3" width="4" height="1.8"/><rect x="32" y="930.5" width="8" height="1.8"/><rect x="36" y="939.7" width="4" height="1.8"/><rect x="32" y="948.9" width="8" height="1.8"/><rect x="36" y="958.1" width="4" height="1.8"/><rect x="32" y="967.3" width="8" height="1.8"/><rect x="36" y="976.5" width="4" height="1.8"/><rect x="32" y="985.7" width="8" height="1.8"/><rect x="36" y="994.9" width="4" height="1.8"/><rect x="24" y="1004.1" width="16" height="1.8"/><rect x="36" y="1013.3" width="4" height="1.8"/><rect x="32" y="1022.5" width="8" height="1.8"/><rect x="36" y="1031.7" width="4" height="1.8"/><rect x="32" y="1040.9" width="8" height="1.8"/><rect x="36" y="1050.1" width="4" height="1.8"/><rect x="32" y="1059.3" width="8" height="1.8"/><rect x="36" y="1068.5" width="4" height="1.8"/><rect x="32" y="1077.7" width="8" height="1.8"/><rect x="36" y="1086.9" width="4" height="1.8"/><rect x="24" y="1096.1" width="16" height="1.8"/><rect x="36" y="1105.3" width="4" height="1.8"/><rect x="32" y="1114.5" width="8" height="1.8"/><rect x="36" y="1123.7" width="4" height="1.8"/><rect x="32" y="1132.9" width="8" height="1.8"/><rect x="36" y="1142.1" width="4" height="1.8"/><rect x="32" y="1151.3" width="8" height="1.8"/><rect x="36" y="1160.5" width="4" height="1.8"/><rect x="32" y="1169.7" width="8" height="1.8"/><rect x="36" y="1178.9" width="4" height="1.8"/><rect x="24" y="1188.1" width="16" height="1.8"/><rect x="36" y="1197.3" width="4" height="1.8"/><rect x="32" y="1206.5" width="8" height="1.8"/><rect x="36" y="1215.7" width="4" height="1.8"/><rect x="32" y="1224.9" width="8" height="1.8"/><rect x="36" y="1234.1" width="4" height="1.8"/><rect x="32" y="1243.3" width="8" height="1.8"/><rect x="36" y="1252.5" width="4" height="1.8"/><rect x="32" y="1261.7" width="8" height="1.8"/><rect x="36" y="1270.9" width="4" height="1.8"/><rect x="24" y="1280.1" width="16" height="1.8"/><rect x="36" y="1289.3" width="4" height="1.8"/><rect x="32" y="1298.5" width="8" height="1.8"/><rect x="36" y="1307.7" width="4" height="1.8"/><rect x="32" y="1316.9" width="8" height="1.8"/><rect x="36" y="1326.1" width="4" height="1.8"/><rect x="32" y="1335.3" width="8" height="1.8"/><rect x="36" y="1344.5" width="4" height="1.8"/><rect x="32" y="1353.7" width="8" height="1.8"/><rect x="36" y="1362.9" width="4" height="1.8"/><rect x="24" y="1372.1" width="16" height="1.8"/><rect x="36" y="1381.3" width="4" height="1.8"/><rect x="32" y="1390.5" width="8" height="1.8"/><rect x="36" y="1399.7" width="4" height="1.8"/><rect x="32" y="1408.9" width="8" height="1.8"/><rect x="36" y="1418.1" width="4" height="1.8"/><rect x="32" y="1427.3" width="8" height="1.8"/><rect x="36" y="1436.5" width="4" height="1.8"/><rect x="32" y="1445.7" width="8" height="1.8"/><rect x="36" y="1454.9" width="4" height="1.8"/><rect x="24" y="1464.1" width="16" height="1.8"/><rect x="36" y="1473.3" width="4" height="1.8"/><rect x="32" y="1482.5" width="8" height="1.8"/><rect x="36" y="1491.7" width="4" height="1.8"/><rect x="32" y="1500.9" width="8" height="1.8"/><rect x="36" y="1510.1" width="4" height="1.8"/><rect x="32" y="1519.3" width="8" height="1.8"/><rect x="36" y="1528.5" width="4" height="1.8"/><rect x="32" y="1537.7" width="8" height="1.8"/><rect x="36" y="1546.9" width="4" height="1.8"/><rect x="24" y="1556.1" width="16" height="1.8"/><rect x="36" y="1565.3" width="4" height="1.8"/><rect x="32" y="1574.5" width="8" height="1.8"/><rect x="36" y="1583.7" width="4" height="1.8"/><rect x="32" y="1592.9" width="8" height="1.8"/><rect x="36" y="1602.1" width="4" height="1.8"/><rect x="32" y="1611.3" width="8" height="1.8"/><rect x="36" y="1620.5" width="4" height="1.8"/><rect x="32" y="1629.7" width="8" height="1.8"/><rect x="36" y="1638.9" width="4" height="1.8"/><rect x="24" y="1648.1" width="16" height="1.8"/><rect x="36" y="1657.3" width="4" height="1.8"/><rect x="32" y="1666.5" width="8" height="1.8"/><rect x="36" y="1675.7" width="4" height="1.8"/><rect x="32" y="1684.9" width="8" height="1.8"/><rect x="36" y="1694.1" width="4" height="1.8"/><rect x="32" y="1703.3" width="8" height="1.8"/><rect x="36" y="1712.5" width="4" height="1.8"/><rect x="32" y="1721.7" width="8" height="1.8"/><rect x="36" y="1730.9" width="4" height="1.8"/><rect x="24" y="1740.1" width="16" height="1.8"/><rect x="36" y="1749.3" width="4" height="1.8"/><rect x="32" y="1758.5" width="8" height="1.8"/><rect x="36" y="1767.7" width="4" height="1.8"/><rect x="32" y="1776.9" width="8" height="1.8"/><rect x="36" y="1786.1" width="4" height="1.8"/><rect x="32" y="1795.3" width="8" height="1.8"/></g><g fill="#c8c8c8" font-family="Liberation Sans" font-size="18"><text transform="translate(20,85.0) rotate(-90)" x="0" y="0" text-anchor="middle">0</text><text transform="translate(20,177.0) rotate(-90)" x="0" y="0" text-anchor="middle">20</text><text transform="translate(20,269.0) rotate(-90)" x="0" y="0" text-anchor="middle">40</text><text transform="translate(20,361.0) rotate(-90)" x="0" y="0" text-anchor="middle">60</text><text transform="translate(20,453.0) rotate(-90)" x="0" y="0" text-anchor="middle">80</text><text transform="translate(20,545.0) rotate(-90)" x="0" y="0" text-anchor="middle">100</text><text transform="translate(20,637.0) rotate(-90)" x="0" y="0" text-anchor="middle">120</text><text transform="translate(20,729.0) rotate(-90)" x="0" y="0" text-anchor="middle">140</text><text transform="translate(20,821.0) rotate(-90)" x="0" y="0" text-anchor="middle">160</text><text transform="translate(20,913.0) rotate(-90)" x="0" y="0" text-anchor="middle">180</text><text transform="translate(20,1005.0) rotate(-90)" x="0" y="0" text-anchor="middle">200</text><text transform="translate(20,1097.0) rotate(-90)" x="0" y="0" text-anchor="middle">220</text><text transform="translate(20,1189.0) rotate(-90)" x="0" y="0" text-anchor="middle">240</text><text transform="translate(20,1281.0) rotate(-90)" x="0" y="0" text-anchor="middle">260</text><text transform="translate(20,1373.0) rotate(-90)" x="0" y="0" text-anchor="middle">280</text><text transform="translate(20,1465.0) rotate(-90)" x="0" y="0" text-anchor="middle">300</text><text transform="translate(20,1557.0) rotate(-90)" x="0" y="0" text-anchor="middle">320</text><text transform="translate(20,1649.0) rotate(-90)" x="0" y="0" text-anchor="middle">340</text><text transform="translate(20,1741.0) rotate(-90)" x="0" y="0" text-anchor="middle">360</text></g></svg><div style="position:absolute;left:484px;top:805px;width:40px;height:2px;background:#e0e0e0;"></div><div style="position:absolute;left:524px;top:260px;width:2304px;height:1798px;background:#222;overflow:hidden;"><div style="position:absolute;left:241px;top:71px;width:3000px;height:1585px;box-sizing:border-box;border:2px solid #e8322a;"></div><div style="position:absolute;left:254px;top:84px;width:3000px;height:1558px;background:#8c8c8c;"></div><div style="position:absolute;left:256px;top:86px;width:3000px;height:1555px;background:#fff;"></div><div style="position:absolute;left:241px;top:1764px;width:3000px;height:300px;box-sizing:border-box;border:2px solid #e8322a;"></div><div style="position:absolute;left:254px;top:1777px;width:3000px;height:300px;background:#8c8c8c;"></div><div style="position:absolute;left:256px;top:1779px;width:3000px;height:300px;background:#fff;"></div><div style="position:absolute;left:1326px;top:1779px;width:2px;height:300px;background:#9a9a9a;"></div><div class="mono" style="position:absolute;left:362.6px;top:169.2px;height:28px;line-height:28px;font-family:'Liberation Mono',monospace;font-size:19.0px;letter-spacing:0.14px;color:#555;white-space:pre;">Este proyecto editorial se</div><div class="mono" style="position:absolute;left:362.6px;top:191.8px;height:28px;line-height:28px;font-family:'Liberation Mono',monospace;font-size:19.0px;letter-spacing:0.06px;color:#555;white-space:pre;">presenta como un dispositivo,</div><div class="mono" style="position:absolute;left:362.6px;top:214.5px;height:28px;line-height:28px;font-family:'Liberation Mono',monospace;font-size:19.0px;letter-spacing:-0.14px;color:#555;white-space:pre;">como un contenedor, como un tejido</div><div class="mono" style="position:absolute;left:362.6px;top:237.1px;height:28px;line-height:28px;font-family:'Liberation Mono',monospace;font-size:19.0px;letter-spacing:0.14px;color:#555;white-space:pre;">inacabado. Contiene los distintos</div><div class="mono" style="position:absolute;left:362.6px;top:259.8px;height:28px;line-height:28px;font-family:'Liberation Mono',monospace;font-size:19.0px;letter-spacing:-0.02px;color:#555;white-space:pre;">hilos que tejieron el proyecto</div><div class="mono" style="position:absolute;left:362.6px;top:282.5px;height:28px;line-height:28px;font-family:'Liberation Mono',monospace;font-size:19.0px;letter-spacing:0.13px;color:#555;white-space:pre;">de Celeste para el Museo</div><div class="mono" style="position:absolute;left:362.6px;top:305.1px;height:28px;line-height:28px;font-family:'Liberation Mono',monospace;font-size:19.0px;letter-spacing:0.15px;color:#555;white-space:pre;">The Contemporary Austin. Es una</div><div class="mono" style="position:absolute;left:362.6px;top:327.8px;height:28px;line-height:28px;font-family:'Liberation Mono',monospace;font-size:19.0px;letter-spacing:0.07px;color:#555;white-space:pre;">colaboración en muchos niveles:</div><div class="mono" style="position:absolute;left:362.6px;top:350.4px;height:28px;line-height:28px;font-family:'Liberation Mono',monospace;font-size:19.0px;letter-spacing:0.12px;color:#555;white-space:pre;">los artistas entre sí, con la</div><div class="mono" style="position:absolute;left:362.6px;top:373.0px;height:28px;line-height:28px;font-family:'Liberation Mono',monospace;font-size:19.0px;letter-spacing:0.14px;color:#555;white-space:pre;">institución, con la editora y el</div><div class="mono" style="position:absolute;left:362.6px;top:395.7px;height:28px;line-height:28px;font-family:'Liberation Mono',monospace;font-size:19.0px;letter-spacing:0.14px;color:#555;white-space:pre;">diseñador, y ahora también con</div><div class="mono" style="position:absolute;left:362.6px;top:418.3px;height:28px;line-height:28px;font-family:'Liberation Mono',monospace;font-size:19.0px;letter-spacing:-0.18px;color:#555;white-space:pre;">el público de esta exposición.</div><div class="mono" style="position:absolute;left:362.6px;top:463.6px;height:28px;line-height:28px;font-family:'Liberation Mono',monospace;font-size:19.0px;letter-spacing:0.14px;color:#555;white-space:pre;">La publicación que tienes en las</div><div class="mono" style="position:absolute;left:362.6px;top:486.3px;height:28px;line-height:28px;font-family:'Liberation Mono',monospace;font-size:19.0px;letter-spacing:0.16px;color:#555;white-space:pre;">manos se conforma por páginas que</div><div class="mono" style="position:absolute;left:362.6px;top:509.0px;height:28px;line-height:28px;font-family:'Liberation Mono',monospace;font-size:19.0px;letter-spacing:0.13px;color:#555;white-space:pre;">fueron imaginadas como pósters</div><div class="mono" style="position:absolute;left:362.6px;top:531.6px;height:28px;line-height:28px;font-family:'Liberation Mono',monospace;font-size:19.0px;letter-spacing:0.05px;color:#555;white-space:pre;">individuales. Son hilos sueltos.</div><div class="mono" style="position:absolute;left:362.6px;top:576.9px;height:28px;line-height:28px;font-family:'Liberation Mono',monospace;font-size:19.0px;letter-spacing:0.02px;color:#555;white-space:pre;">Ésta es una publicación bilingüe.</div><div class="mono" style="position:absolute;left:362.6px;top:599.5px;height:28px;line-height:28px;font-family:'Liberation Mono',monospace;font-size:19.0px;letter-spacing:0.15px;color:#555;white-space:pre;">El lado A corresponde al inglés</div><div class="mono" style="position:absolute;left:362.6px;top:622.2px;height:28px;line-height:28px;font-family:'Liberation Mono',monospace;font-size:19.0px;letter-spacing:-0.45px;color:#555;white-space:pre;">y el lado B al español; los idiomas</div><div class="mono" style="position:absolute;left:362.6px;top:644.8px;height:28px;line-height:28px;font-family:'Liberation Mono',monospace;font-size:19.0px;letter-spacing:0.14px;color:#555;white-space:pre;">se mezclan intencionalmente. Los</div><div class="mono" style="position:absolute;left:362.6px;top:667.5px;height:28px;line-height:28px;font-family:'Liberation Mono',monospace;font-size:19.0px;letter-spacing:-0.79px;color:#555;white-space:pre;">folios de cada lado van del 1 al 17.</div><div class="mono" style="position:absolute;left:362.6px;top:690.1px;height:28px;line-height:28px;font-family:'Liberation Mono',monospace;font-size:19.0px;letter-spacing:0.09px;color:#555;white-space:pre;">La lectura comienza aquí, en el</div><div class="mono" style="position:absolute;left:362.6px;top:1500.8px;height:28px;line-height:28px;font-family:'Liberation Mono',monospace;font-size:19.0px;letter-spacing:-0.29px;color:#555;white-space:pre;">Reading begins here, at the center</div><div class="mono" style="position:absolute;left:362.6px;top:1523.5px;height:28px;line-height:28px;font-family:'Liberation Mono',monospace;font-size:19.0px;letter-spacing:-0.15px;color:#555;white-space:pre;">of the book.</div><svg style="position:absolute;left:798.5px;top:46.5px" width="1275" height="1651"><use href="#sk" width="1275" height="1651"/></svg><div style="position:absolute;left:241px;top:71px;width:1850px;height:2px;background:#e8322a;"></div><div style="position:absolute;left:256px;top:1654px;width:3000px;height:2px;background:#e8322a;"></div><div style="position:absolute;left:254px;top:84px;width:3000px;height:2px;background:#8c8c8c;"></div><div style="position:absolute;left:254px;top:1641px;width:3000px;height:1.5px;background:#8c8c8c;"></div><div style="position:absolute;left:1326px;top:86px;width:2px;height:1555px;background:#9a9a9a;"></div><div style="position:absolute;left:798px;top:45px;width:1277px;height:1654px;box-sizing:border-box;border:2px solid #3b7de0;"></div><div style="position:absolute;left:1436px;top:-4px;width:2px;height:40px;background:#3a6ab8;"></div><div style="position:absolute;left:788px;top:35px;width:22px;height:22px;border-radius:50%;background:#fff;box-shadow:0 1px 3px rgba(0,0,0,0.35);"></div><div style="position:absolute;left:791px;top:38px;width:16px;height:16px;border-radius:50%;background:linear-gradient(135deg,#6da4ec,#2d68c8);"></div><div style="position:absolute;left:1425.5px;top:35px;width:22px;height:22px;border-radius:50%;background:#fff;box-shadow:0 1px 3px rgba(0,0,0,0.35);"></div><div style="position:absolute;left:1428.5px;top:38px;width:16px;height:16px;border-radius:50%;background:linear-gradient(135deg,#6da4ec,#2d68c8);"></div><div style="position:absolute;left:2063px;top:35px;width:22px;height:22px;border-radius:50%;background:#fff;box-shadow:0 1px 3px rgba(0,0,0,0.35);"></div><div style="position:absolute;left:2066px;top:38px;width:16px;height:16px;border-radius:50%;background:linear-gradient(135deg,#6da4ec,#2d68c8);"></div><div style="position:absolute;left:788px;top:1687px;width:22px;height:22px;border-radius:50%;background:#fff;box-shadow:0 1px 3px rgba(0,0,0,0.35);"></div><div style="position:absolute;left:791px;top:1690px;width:16px;height:16px;border-radius:50%;background:linear-gradient(135deg,#6da4ec,#2d68c8);"></div><div style="position:absolute;left:1425.5px;top:1687px;width:22px;height:22px;border-radius:50%;background:#fff;box-shadow:0 1px 3px rgba(0,0,0,0.35);"></div><div style="position:absolute;left:1428.5px;top:1690px;width:16px;height:16px;border-radius:50%;background:linear-gradient(135deg,#6da4ec,#2d68c8);"></div><div style="position:absolute;left:2063px;top:1687px;width:22px;height:22px;border-radius:50%;background:#fff;box-shadow:0 1px 3px rgba(0,0,0,0.35);"></div><div style="position:absolute;left:2066px;top:1690px;width:16px;height:16px;border-radius:50%;background:linear-gradient(135deg,#6da4ec,#2d68c8);"></div><div style="position:absolute;left:788px;top:861px;width:22px;height:22px;border-radius:50%;background:#fff;box-shadow:0 1px 3px rgba(0,0,0,0.35);"></div><div style="position:absolute;left:791px;top:864px;width:16px;height:16px;border-radius:50%;background:linear-gradient(135deg,#6da4ec,#2d68c8);"></div><div style="position:absolute;left:2063px;top:861px;width:22px;height:22px;border-radius:50%;background:#fff;box-shadow:0 1px 3px rgba(0,0,0,0.35);"></div><div style="position:absolute;left:2066px;top:864px;width:16px;height:16px;border-radius:50%;background:linear-gradient(135deg,#6da4ec,#2d68c8);"></div></div><div style="position:absolute;left:1950px;top:236px;width:21px;height:21px;background:#5a5a5a;border-radius:50%;opacity:0.9;"></div><div style="position:absolute;left:536px;top:966px;width:2046px;height:809px;border-radius:20px;box-shadow:0 18px 50px rgba(0,0,0,0.55),0 0 0 1px rgba(0,0,0,0.5);"><div style="position:absolute;left:0px;top:0px;width:2046px;height:809px;background:#333333;border-radius:20px;box-shadow:0 0 0 1.5px #5c5c5c inset;"></div><div style="position:absolute;left:16px;top:15.600000000000023px;width:24px;height:24px;background:#4d4d4d;border-radius:50%;"></div><div style="position:absolute;left:56px;top:15.600000000000023px;width:24px;height:24px;background:#4d4d4d;border-radius:50%;"></div><div style="position:absolute;left:96px;top:15.600000000000023px;width:24px;height:24px;background:#4d4d4d;border-radius:50%;"></div><div style="position:absolute;left:523px;width:1000px;text-align:center;top:12.0px;height:32px;line-height:32px;font-size:23px;color:#e8e8e8;font-weight:normal;white-space:nowrap;">Resource Manager</div><div style="position:absolute;left:26px;top:96px;width:1396px;height:55px;background:#272727;"></div><div style="position:absolute;left:36.60000000000002px;top:108.0px;height:32px;line-height:32px;font-size:23px;color:#ececec;font-weight:normal;white-space:nowrap;">Name</div><div style="position:absolute;left:538px;top:108.0px;height:32px;line-height:32px;font-size:23px;color:#ececec;font-weight:normal;white-space:nowrap;">Status</div><div style="position:absolute;left:675px;top:108.0px;height:32px;line-height:32px;font-size:23px;color:#ececec;font-weight:normal;white-space:nowrap;">Page</div><div style="position:absolute;left:800px;top:108.0px;height:32px;line-height:32px;font-size:23px;color:#ececec;font-weight:normal;white-space:nowrap;">Placement</div><div style="position:absolute;left:966px;top:108.0px;height:32px;line-height:32px;font-size:23px;color:#ececec;font-weight:normal;white-space:nowrap;">Size</div><div style="position:absolute;left:1092px;top:108.0px;height:32px;line-height:32px;font-size:23px;color:#ececec;font-weight:normal;white-space:nowrap;">Placed DPI</div><div style="position:absolute;left:1259px;top:108.0px;height:32px;line-height:32px;font-size:23px;color:#ececec;font-weight:normal;white-space:nowrap;">Type</div><svg style="position:absolute;left:490px;top:116px;" width="22" height="14" viewBox="0 0 22 14"><path d="M1.5 12 L11 2.5 L20.5 12" fill="none" stroke="#e0e0e0" stroke-width="2"/></svg><div style="position:absolute;left:527px;top:102px;width:2px;height:44px;background:#3d3d3d;"></div><div style="position:absolute;left:663px;top:102px;width:2px;height:44px;background:#3d3d3d;"></div><div style="position:absolute;left:789px;top:102px;width:2px;height:44px;background:#3d3d3d;"></div><div style="position:absolute;left:955px;top:102px;width:2px;height:44px;background:#3d3d3d;"></div><div style="position:absolute;left:1081px;top:102px;width:2px;height:44px;background:#3d3d3d;"></div><div style="position:absolute;left:1247px;top:102px;width:2px;height:44px;background:#3d3d3d;"></div><div style="position:absolute;left:26px;top:151px;width:1396px;height:521px;overflow:hidden;"><div style="position:absolute;left:0px;top:0px;width:1396px;height:16px;background:#313131;"></div><div style="position:absolute;left:49px;top:0px;width:35px;height:12px;background:linear-gradient(90deg,#d8d0b0,#a8c8c0 50%,#8cc0d8);"></div><svg style="position:absolute;left:49px;top:0px;" width="35" height="12" viewBox="0 0 35 12"><path d="M22 0 L35 10" stroke="#c04030" stroke-width="3"/><ellipse cx="12" cy="4" rx="8" ry="6" fill="none" stroke="#7a8a70" stroke-width="2"/></svg><div style="position:absolute;left:0px;top:16.0px;width:1396px;height:56.1px;background:#383838;"></div><svg style="position:absolute;left:49px;top:20.0px;" width="35" height="48" viewBox="0 0 35 48"><rect width="35" height="48" fill="#e07040"/><path d="M-10 0 L20 48" stroke="#a83a2a" stroke-width="3.5"/><path d="M45 0 L15 48" stroke="#f0a070" stroke-width="2.5" stroke-dasharray="5 4"/><path d="M-1 0 L29 48" stroke="#a83a2a" stroke-width="3.5"/><path d="M36 0 L6 48" stroke="#f0a070" stroke-width="2.5" stroke-dasharray="5 4"/><path d="M8 0 L38 48" stroke="#a83a2a" stroke-width="3.5"/><path d="M27 0 L-3 48" stroke="#f0a070" stroke-width="2.5" stroke-dasharray="5 4"/><path d="M17 0 L47 48" stroke="#a83a2a" stroke-width="3.5"/><path d="M18 0 L-12 48" stroke="#f0a070" stroke-width="2.5" stroke-dasharray="5 4"/><path d="M26 0 L56 48" stroke="#a83a2a" stroke-width="3.5"/><path d="M9 0 L-21 48" stroke="#f0a070" stroke-width="2.5" stroke-dasharray="5 4"/><path d="M35 0 L65 48" stroke="#a83a2a" stroke-width="3.5"/><path d="M0 0 L-30 48" stroke="#f0a070" stroke-width="2.5" stroke-dasharray="5 4"/></svg><div style="position:absolute;left:109px;top:26.5px;height:32px;line-height:32px;font-size:23px;color:#ececec;font-weight:normal;white-space:nowrap;">Escanear 7.tiff</div><div style="position:absolute;left:508px;top:27.5px;height:32px;line-height:32px;font-size:23px;color:#ececec;font-weight:normal;white-space:nowrap;">OK</div><div style="position:absolute;left:644.5999999999999px;top:27.5px;height:32px;line-height:32px;font-size:23px;color:#ececec;font-weight:normal;white-space:nowrap;">18</div><div style="position:absolute;left:770px;top:27.5px;height:32px;line-height:32px;font-size:23px;color:#ececec;font-weight:normal;white-space:nowrap;">Linked</div><div style="position:absolute;left:937px;top:27.5px;height:32px;line-height:32px;font-size:23px;color:#ececec;font-weight:normal;white-space:nowrap;">31.21 MB</div><div style="position:absolute;left:1062.5px;top:27.5px;height:32px;line-height:32px;font-size:23px;color:#ececec;font-weight:normal;white-space:nowrap;">336 dpi</div><div style="position:absolute;left:1229px;top:27.5px;height:32px;line-height:32px;font-size:23px;color:#ececec;font-weight:normal;white-space:nowrap;">TIFF</div><svg style="position:absolute;left:49px;top:76.1px;" width="35" height="48" viewBox="0 0 35 48"><rect width="35" height="48" fill="#8a8a8a"/><path d="M0 0 H35 V20 Q20 10 0 18Z" fill="#c8c8c8"/><circle cx="15" cy="31" r="11" fill="#3a3a3a"/><circle cx="15" cy="31" r="6" fill="#6a6a6a"/><path d="M24 38 L35 48 H20Z" fill="#ddd"/></svg><div style="position:absolute;left:109px;top:82.6px;height:32px;line-height:32px;font-size:23px;color:#ececec;font-weight:normal;white-space:nowrap;">Escanear 9.tiff</div><div style="position:absolute;left:508px;top:83.6px;height:32px;line-height:32px;font-size:23px;color:#ececec;font-weight:normal;white-space:nowrap;">OK</div><div style="position:absolute;left:644.5999999999999px;top:83.6px;height:32px;line-height:32px;font-size:23px;color:#ececec;font-weight:normal;white-space:nowrap;">59</div><div style="position:absolute;left:770px;top:83.6px;height:32px;line-height:32px;font-size:23px;color:#ececec;font-weight:normal;white-space:nowrap;">Linked</div><div style="position:absolute;left:937px;top:83.6px;height:32px;line-height:32px;font-size:23px;color:#ececec;font-weight:normal;white-space:nowrap;">2.74 MB</div><div style="position:absolute;left:1062.5px;top:83.6px;height:32px;line-height:32px;font-size:23px;color:#ececec;font-weight:normal;white-space:nowrap;">326 dpi</div><div style="position:absolute;left:1229px;top:83.6px;height:32px;line-height:32px;font-size:23px;color:#ececec;font-weight:normal;white-space:nowrap;">TIFF</div><div style="position:absolute;left:0px;top:128.2px;width:1396px;height:56.1px;background:#383838;"></div><svg style="position:absolute;left:47px;top:132.2px;" width="38" height="48" viewBox="0 0 38 48"><rect width="38" height="48" fill="#eee"/><rect x="3" y="3" width="32" height="42" fill="#8a8a8a"/><path d="M3 10 Q18 3 35 14 M3 18 Q20 10 35 24" stroke="#555" stroke-width="3" fill="none"/><ellipse cx="20" cy="34" rx="14" ry="9" fill="#5a5a5a"/></svg><div style="position:absolute;left:109px;top:138.8px;height:32px;line-height:32px;font-size:23px;color:#ececec;font-weight:normal;white-space:nowrap;">Hacer olas III bn.tiff</div><div style="position:absolute;left:508px;top:139.8px;height:32px;line-height:32px;font-size:23px;color:#ececec;font-weight:normal;white-space:nowrap;">OK</div><div style="position:absolute;left:644.5999999999999px;top:139.8px;height:32px;line-height:32px;font-size:23px;color:#ececec;font-weight:normal;white-space:nowrap;">55</div><div style="position:absolute;left:770px;top:139.8px;height:32px;line-height:32px;font-size:23px;color:#ececec;font-weight:normal;white-space:nowrap;">Linked</div><div style="position:absolute;left:937px;top:139.8px;height:32px;line-height:32px;font-size:23px;color:#ececec;font-weight:normal;white-space:nowrap;">11.15 MB</div><div style="position:absolute;left:1062.5px;top:139.8px;height:32px;line-height:32px;font-size:23px;color:#ececec;font-weight:normal;white-space:nowrap;">246 dpi</div><div style="position:absolute;left:1229px;top:139.8px;height:32px;line-height:32px;font-size:23px;color:#ececec;font-weight:normal;white-space:nowrap;">TIFF</div><svg style="position:absolute;left:47px;top:188.4px;" width="38" height="48" viewBox="0 0 38 48"><rect width="38" height="48" fill="#eee"/><rect x="3" y="3" width="32" height="42" fill="#b0b0b0"/><path d="M3 30 Q15 12 35 20 V45 H3Z" fill="#4a4a4a"/><path d="M3 22 Q18 8 35 14" stroke="#777" stroke-width="2" fill="none"/></svg><div style="position:absolute;left:109px;top:194.9px;height:32px;line-height:32px;font-size:23px;color:#ececec;font-weight:normal;white-space:nowrap;">Hacer olas XI bn.tiff</div><div style="position:absolute;left:508px;top:195.9px;height:32px;line-height:32px;font-size:23px;color:#ececec;font-weight:normal;white-space:nowrap;">OK</div><div style="position:absolute;left:644.5999999999999px;top:195.9px;height:32px;line-height:32px;font-size:23px;color:#ececec;font-weight:normal;white-space:nowrap;">42</div><div style="position:absolute;left:770px;top:195.9px;height:32px;line-height:32px;font-size:23px;color:#ececec;font-weight:normal;white-space:nowrap;">Linked</div><div style="position:absolute;left:937px;top:195.9px;height:32px;line-height:32px;font-size:23px;color:#ececec;font-weight:normal;white-space:nowrap;">7.24 MB</div><div style="position:absolute;left:1062.5px;top:195.9px;height:32px;line-height:32px;font-size:23px;color:#ececec;font-weight:normal;white-space:nowrap;">302 dpi</div><div style="position:absolute;left:1229px;top:195.9px;height:32px;line-height:32px;font-size:23px;color:#ececec;font-weight:normal;white-space:nowrap;">TIFF</div><div style="position:absolute;left:0px;top:240.4px;width:1396px;height:56.1px;background:#383838;"></div><svg style="position:absolute;left:47px;top:244.4px;" width="38" height="48" viewBox="0 0 38 48"><rect width="38" height="48" fill="#eee"/><rect x="3" y="3" width="32" height="42" fill="#9a9a9a"/><path d="M3 36 L20 10 L35 30 V45 H3Z" fill="#3e3e3e"/></svg><div style="position:absolute;left:109px;top:250.9px;height:32px;line-height:32px;font-size:23px;color:#ececec;font-weight:normal;white-space:nowrap;">Hacer olas XII(1) bn.tiff</div><div style="position:absolute;left:508px;top:251.9px;height:32px;line-height:32px;font-size:23px;color:#ececec;font-weight:normal;white-space:nowrap;">OK</div><div style="position:absolute;left:644.5999999999999px;top:251.9px;height:32px;line-height:32px;font-size:23px;color:#ececec;font-weight:normal;white-space:nowrap;">58</div><div style="position:absolute;left:770px;top:251.9px;height:32px;line-height:32px;font-size:23px;color:#ececec;font-weight:normal;white-space:nowrap;">Linked</div><div style="position:absolute;left:937px;top:251.9px;height:32px;line-height:32px;font-size:23px;color:#ececec;font-weight:normal;white-space:nowrap;">5.84 MB</div><div style="position:absolute;left:1062.5px;top:251.9px;height:32px;line-height:32px;font-size:23px;color:#ececec;font-weight:normal;white-space:nowrap;">234 dpi</div><div style="position:absolute;left:1229px;top:251.9px;height:32px;line-height:32px;font-size:23px;color:#ececec;font-weight:normal;white-space:nowrap;">TIFF</div><svg style="position:absolute;left:49px;top:300.6px;overflow:visible;" width="35" height="48" viewBox="0 0 35 48"><text x="-12" y="28" font-family="Liberation Serif" font-size="9" fill="#111" font-weight="bold">HOST</text><text x="16" y="28" font-family="Liberation Serif" font-size="8.5" fill="#1a1a1a">Celeste</text></svg><div style="position:absolute;left:109px;top:307.1px;height:32px;line-height:32px;font-size:23px;color:#ececec;font-weight:normal;white-space:nowrap;">HOST Celeste outlines.eps</div><div style="position:absolute;left:508px;top:308.1px;height:32px;line-height:32px;font-size:23px;color:#ececec;font-weight:normal;white-space:nowrap;">OK</div><div style="position:absolute;left:644.5999999999999px;top:308.1px;height:32px;line-height:32px;font-size:23px;color:#ececec;font-weight:normal;white-space:nowrap;">38</div><div style="position:absolute;left:770px;top:308.1px;height:32px;line-height:32px;font-size:23px;color:#ececec;font-weight:normal;white-space:nowrap;">Linked</div><div style="position:absolute;left:937px;top:308.1px;height:32px;line-height:32px;font-size:23px;color:#ececec;font-weight:normal;white-space:nowrap;">7.9 kB</div><div style="position:absolute;left:1062.5px;top:308.1px;height:32px;line-height:32px;font-size:23px;color:#ececec;font-weight:normal;white-space:nowrap;">496 dpi</div><div style="position:absolute;left:1229px;top:308.1px;height:32px;line-height:32px;font-size:23px;color:#ececec;font-weight:normal;white-space:nowrap;">EPS</div><div style="position:absolute;left:0px;top:352.6px;width:1396px;height:56.1px;background:#383838;"></div><svg style="position:absolute;left:49px;top:356.7px;" width="35" height="48" viewBox="0 0 35 48"><rect width="35" height="48" fill="#e8b0a0"/><circle cx="9" cy="10" r="7" fill="#2a8ad0"/><circle cx="9" cy="10" r="4" fill="#c04030"/><circle cx="26" cy="15" r="8" fill="#2a8ad0"/><circle cx="26" cy="15" r="5" fill="#a03020"/><circle cx="12" cy="33" r="9" fill="#2a8ad0"/><circle cx="12" cy="33" r="5.5" fill="#6a4030"/><circle cx="28" cy="38" r="5" fill="#d86050"/><rect x="0" y="0" width="35" height="3" fill="#3ab0a0"/></svg><div style="position:absolute;left:109px;top:363.2px;height:32px;line-height:32px;font-size:23px;color:#ececec;font-weight:normal;white-space:nowrap;">IMG_20220607_193608.tiff</div><div style="position:absolute;left:508px;top:364.2px;height:32px;line-height:32px;font-size:23px;color:#ececec;font-weight:normal;white-space:nowrap;">OK</div><div style="position:absolute;left:644.5999999999999px;top:364.2px;height:32px;line-height:32px;font-size:23px;color:#ececec;font-weight:normal;white-space:nowrap;">12</div><div style="position:absolute;left:770px;top:364.2px;height:32px;line-height:32px;font-size:23px;color:#ececec;font-weight:normal;white-space:nowrap;">Linked</div><div style="position:absolute;left:937px;top:364.2px;height:32px;line-height:32px;font-size:23px;color:#ececec;font-weight:normal;white-space:nowrap;">16.47 MB</div><div style="position:absolute;left:1062.5px;top:364.2px;height:32px;line-height:32px;font-size:23px;color:#ececec;font-weight:normal;white-space:nowrap;">444 dpi</div><div style="position:absolute;left:1229px;top:364.2px;height:32px;line-height:32px;font-size:23px;color:#ececec;font-weight:normal;white-space:nowrap;">TIFF</div><svg style="position:absolute;left:49px;top:412.8px;" width="35" height="48" viewBox="0 0 35 48"><rect width="35" height="48" fill="#7a5a30"/><circle cx="8" cy="8" r="6" fill="#c09050"/><circle cx="24" cy="12" r="7" fill="#402010"/><circle cx="10" cy="24" r="7" fill="#e0b040"/><circle cx="26" cy="28" r="7" fill="#b06030"/><circle cx="12" cy="40" r="6" fill="#d8c080"/><circle cx="28" cy="42" r="6" fill="#f0d050"/><circle cx="24" cy="12" r="3" fill="#c03020"/></svg><div style="position:absolute;left:109px;top:419.2px;height:32px;line-height:32px;font-size:23px;color:#ececec;font-weight:normal;white-space:nowrap;">IMG_20220608_094047.tiff</div><div style="position:absolute;left:508px;top:420.2px;height:32px;line-height:32px;font-size:23px;color:#ececec;font-weight:normal;white-space:nowrap;">OK</div><div style="position:absolute;left:644.5999999999999px;top:420.2px;height:32px;line-height:32px;font-size:23px;color:#ececec;font-weight:normal;white-space:nowrap;">12</div><div style="position:absolute;left:770px;top:420.2px;height:32px;line-height:32px;font-size:23px;color:#ececec;font-weight:normal;white-space:nowrap;">Linked</div><div style="position:absolute;left:937px;top:420.2px;height:32px;line-height:32px;font-size:23px;color:#ececec;font-weight:normal;white-space:nowrap;">10.9 MB</div><div style="position:absolute;left:1062.5px;top:420.2px;height:32px;line-height:32px;font-size:23px;color:#ececec;font-weight:normal;white-space:nowrap;">417 dpi</div><div style="position:absolute;left:1229px;top:420.2px;height:32px;line-height:32px;font-size:23px;color:#ececec;font-weight:normal;white-space:nowrap;">TIFF</div><div style="position:absolute;left:0px;top:464.8px;width:1396px;height:56.1px;background:#6580a9;"></div><svg style="position:absolute;left:47px;top:468.9px" width="38" height="48"><use href="#sk" width="38" height="48"/></svg><div style="position:absolute;left:109px;top:475.4px;height:32px;line-height:32px;font-size:23px;color:#ececec;font-weight:normal;white-space:nowrap;">img1 ok.tiff</div><div style="position:absolute;left:508px;top:476.4px;height:32px;line-height:32px;font-size:23px;color:#ececec;font-weight:normal;white-space:nowrap;">OK</div><div style="position:absolute;left:644.5999999999999px;top:476.4px;height:32px;line-height:32px;font-size:23px;color:#ececec;font-weight:normal;white-space:nowrap;">3</div><div style="position:absolute;left:770px;top:476.4px;height:32px;line-height:32px;font-size:23px;color:#ececec;font-weight:normal;white-space:nowrap;">Linked</div><div style="position:absolute;left:937px;top:476.4px;height:32px;line-height:32px;font-size:23px;color:#ececec;font-weight:normal;white-space:nowrap;">1.18 MB</div><div style="position:absolute;left:1062.5px;top:476.4px;height:32px;line-height:32px;font-size:23px;color:#ececec;font-weight:normal;white-space:nowrap;">324 dpi</div><div style="position:absolute;left:1229px;top:476.4px;height:32px;line-height:32px;font-size:23px;color:#ececec;font-weight:normal;white-space:nowrap;">TIFF</div></div><div style="position:absolute;left:26px;top:686.0px;height:30px;line-height:30px;font-size:21.7px;color:#ececec;font-weight:normal;white-space:nowrap;">/Users/chuchocaba/Desktop/Celeste/imágenes finales/img1 ok.tiff</div><div style="position:absolute;left:25px;top:746px;width:226px;height:39px;background:#3c3c3c;border-radius:6px;box-sizing:border-box;border:1.5px solid #262626;"></div><div style="position:absolute;left:-362.0px;width:1000px;text-align:center;top:750.5px;height:30px;line-height:30px;font-size:21.5px;color:#e8e8e8;font-weight:normal;white-space:nowrap;">Locate in Document</div><div style="position:absolute;left:260px;top:746px;width:212px;height:39px;background:#313131;border-radius:6px;box-sizing:border-box;border:1.5px solid #262626;"></div><div style="position:absolute;left:-134px;width:1000px;text-align:center;top:750.5px;height:30px;line-height:30px;font-size:21.5px;color:#7a7a7a;font-weight:normal;white-space:nowrap;">Update</div><div style="position:absolute;left:481px;top:746px;width:210px;height:39px;background:#3c3c3c;border-radius:6px;box-sizing:border-box;border:1.5px solid #262626;"></div><div style="position:absolute;left:86.0px;width:1000px;text-align:center;top:750.5px;height:30px;line-height:30px;font-size:21.5px;color:#e8e8e8;font-weight:normal;white-space:nowrap;">Replace...</div><div style="position:absolute;left:701px;top:746px;width:210px;height:39px;background:#3c3c3c;border-radius:6px;box-sizing:border-box;border:1.5px solid #262626;"></div><div style="position:absolute;left:306.0px;width:1000px;text-align:center;top:750.5px;height:30px;line-height:30px;font-size:21.5px;color:#e8e8e8;font-weight:normal;white-space:nowrap;">Embed</div><div style="position:absolute;left:921px;top:746px;width:210px;height:39px;background:#3c3c3c;border-radius:6px;box-sizing:border-box;border:1.5px solid #262626;"></div><div style="position:absolute;left:526.0px;width:1000px;text-align:center;top:750.5px;height:30px;line-height:30px;font-size:21.5px;color:#e8e8e8;font-weight:normal;white-space:nowrap;">Collect...</div><div style="position:absolute;left:1141px;top:746px;width:210px;height:39px;background:#3c3c3c;border-radius:6px;box-sizing:border-box;border:1.5px solid #262626;"></div><div style="position:absolute;left:746.0px;width:1000px;text-align:center;top:750.5px;height:30px;line-height:30px;font-size:21.5px;color:#e8e8e8;font-weight:normal;white-space:nowrap;">Show in Finder</div><div style="position:absolute;left:1841px;top:745px;width:178px;height:41px;background:#3c3c3c;border-radius:6px;box-sizing:border-box;border:1.5px solid #262626;"></div><div style="position:absolute;left:1430.0px;width:1000px;text-align:center;top:750.5px;height:30px;line-height:30px;font-size:21.5px;color:#e8e8e8;font-weight:normal;white-space:nowrap;">Close</div><div style="position:absolute;left:1438px;top:96px;width:593px;height:619px;background:#393939;border-radius:8px;box-sizing:border-box;border:1.5px solid #474747;"></div><div style="position:absolute;left:1553px;top:115px;width:294px;height:294px;background:#3e3e3e;border-radius:14px;box-sizing:border-box;border:3.5px solid #7b7b7b;"></div><svg style="position:absolute;left:1596px;top:128px" width="208" height="268"><use href="#sk" width="208" height="268"/></svg><div style="position:absolute;left:749px;width:1000px;text-align:right;top:440.5px;height:29px;line-height:29px;font-size:21.4px;color:#e6e6e6;font-weight:normal;white-space:nowrap;">Original size:</div><div style="position:absolute;left:1767px;top:440.5px;height:29px;line-height:29px;font-size:21.4px;color:#e6e6e6;font-weight:normal;white-space:nowrap;">3543 px x 4585 px</div><div style="position:absolute;left:749px;width:1000px;text-align:right;top:484.5px;height:29px;line-height:29px;font-size:21.4px;color:#e6e6e6;font-weight:normal;white-space:nowrap;">Original DPI:</div><div style="position:absolute;left:1767px;top:484.5px;height:29px;line-height:29px;font-size:21.4px;color:#e6e6e6;font-weight:normal;white-space:nowrap;">300</div><div style="position:absolute;left:749px;width:1000px;text-align:right;top:528.5px;height:29px;line-height:29px;font-size:21.4px;color:#e6e6e6;font-weight:normal;white-space:nowrap;">Placed size:</div><div style="position:absolute;left:1767px;top:528.5px;height:29px;line-height:29px;font-size:21.4px;color:#e6e6e6;font-weight:normal;white-space:nowrap;">277.3 mm x 358.9 mm</div><div style="position:absolute;left:749px;width:1000px;text-align:right;top:572.5px;height:29px;line-height:29px;font-size:21.4px;color:#e6e6e6;font-weight:normal;white-space:nowrap;">Colour space:</div><div style="position:absolute;left:1767px;top:572.5px;height:29px;line-height:29px;font-size:21.4px;color:#e6e6e6;font-weight:normal;white-space:nowrap;">Grey</div><div style="position:absolute;left:749px;width:1000px;text-align:right;top:616.5px;height:29px;line-height:29px;font-size:21.4px;color:#e6e6e6;font-weight:normal;white-space:nowrap;">ICC profile:</div><div style="position:absolute;left:1767px;top:616.5px;height:29px;line-height:29px;font-size:21.4px;color:#e6e6e6;font-weight:normal;white-space:nowrap;">Generic Gray Profile</div></div><div style="position:absolute;left:2828px;top:220px;width:532px;height:1838px;background:#2e2e2e;"></div><div style="position:absolute;left:2828px;top:260px;width:4px;height:1798px;background:#383838;"></div><div style="position:absolute;left:2832px;top:224px;width:526px;height:40px;background:#292929;"></div><div style="position:absolute;left:2846px;top:240px;width:2px;height:18px;background:#555;"></div><div style="position:absolute;left:2852px;top:240px;width:2px;height:18px;background:#555;"></div><div style="position:absolute;left:2870px;top:224px;width:110px;height:40px;background:#3c3c3c;"></div><div style="position:absolute;left:2876px;top:228.5px;height:29px;line-height:29px;font-size:21px;color:#f0f0f0;font-weight:normal;white-space:nowrap;">Transform</div><div style="position:absolute;left:2832px;top:264px;width:526px;height:200px;background:#3c3c3c;"></div><div style="position:absolute;left:2871px;top:310px;width:67px;height:66px;background:#686868;"></div><div style="position:absolute;left:2867px;top:305px;width:10px;height:10px;background:#a8a8a8;"></div><div style="position:absolute;left:2867px;top:338px;width:10px;height:10px;background:#a8a8a8;"></div><div style="position:absolute;left:2867px;top:371px;width:10px;height:10px;background:#a8a8a8;"></div><div style="position:absolute;left:2900px;top:305px;width:10px;height:10px;background:#a8a8a8;"></div><div style="position:absolute;left:2900px;top:338px;width:10px;height:10px;background:#a8a8a8;"></div><div style="position:absolute;left:2900px;top:371px;width:10px;height:10px;background:#a8a8a8;"></div><div style="position:absolute;left:2933px;top:305px;width:10px;height:10px;background:#a8a8a8;"></div><div style="position:absolute;left:2933px;top:338px;width:10px;height:10px;background:#a8a8a8;"></div><div style="position:absolute;left:2933px;top:371px;width:10px;height:10px;background:#a8a8a8;"></div><div style="position:absolute;left:2863px;top:301px;width:19px;height:19px;background:#fff;"></div><div style="position:absolute;left:1998px;width:1000px;text-align:right;top:291.5px;height:29px;line-height:29px;font-size:21px;color:#e0e0e0;font-weight:normal;white-space:nowrap;">X:</div><div style="position:absolute;left:3006px;top:284px;width:120px;height:38px;background:#2b2b2b;border-radius:6px;box-shadow:0 1px 0 #4a4a4a;"></div><div style="position:absolute;left:3014px;top:289.5px;height:29px;line-height:29px;font-size:21px;color:#ececec;font-weight:normal;white-space:nowrap;">118 mm</div><div style="position:absolute;left:1998px;width:1000px;text-align:right;top:333.5px;height:29px;line-height:29px;font-size:21px;color:#e0e0e0;font-weight:normal;white-space:nowrap;">Y:</div><div style="position:absolute;left:3006px;top:328px;width:120px;height:38px;background:#2b2b2b;border-radius:6px;box-shadow:0 1px 0 #4a4a4a;"></div><div style="position:absolute;left:3014px;top:333.5px;height:29px;line-height:29px;font-size:21px;color:#ececec;font-weight:normal;white-space:nowrap;">-8.6 mm</div><div style="position:absolute;left:1998px;width:1000px;text-align:right;top:397.5px;height:29px;line-height:29px;font-size:21px;color:#e0e0e0;font-weight:normal;white-space:nowrap;">R:</div><div style="position:absolute;left:3006px;top:392px;width:120px;height:38px;background:#2b2b2b;border-radius:6px;box-shadow:0 1px 0 #4a4a4a;"></div><div style="position:absolute;left:3014px;top:397.5px;height:29px;line-height:29px;font-size:21px;color:#ececec;font-weight:normal;white-space:nowrap;">0 °</div><svg style="position:absolute;left:3104px;top:406.0px;" width="14" height="11" viewBox="0 0 14 11"><path d="M0 0 H14 L7 11Z" fill="#ddd"/></svg><div style="position:absolute;left:2167px;width:1000px;text-align:right;top:291.5px;height:29px;line-height:29px;font-size:21px;color:#e0e0e0;font-weight:normal;white-space:nowrap;">W:</div><div style="position:absolute;left:3174px;top:284px;width:119px;height:38px;background:#2b2b2b;border-radius:6px;box-shadow:0 1px 0 #4a4a4a;"></div><div style="position:absolute;left:3182px;top:289.5px;height:29px;line-height:29px;font-size:21px;color:#ececec;font-weight:normal;white-space:nowrap;">277.3 mm</div><div style="position:absolute;left:2167px;width:1000px;text-align:right;top:333.5px;height:29px;line-height:29px;font-size:21px;color:#e0e0e0;font-weight:normal;white-space:nowrap;">H:</div><div style="position:absolute;left:3174px;top:328px;width:119px;height:38px;background:#2b2b2b;border-radius:6px;box-shadow:0 1px 0 #4a4a4a;"></div><div style="position:absolute;left:3182px;top:333.5px;height:29px;line-height:29px;font-size:21px;color:#ececec;font-weight:normal;white-space:nowrap;">358.9 mm</div><div style="position:absolute;left:2167px;width:1000px;text-align:right;top:397.5px;height:29px;line-height:29px;font-size:21px;color:#e0e0e0;font-weight:normal;white-space:nowrap;">S:</div><div style="position:absolute;left:3174px;top:392px;width:119px;height:38px;background:#2b2b2b;border-radius:6px;box-shadow:0 1px 0 #4a4a4a;"></div><div style="position:absolute;left:3182px;top:397.5px;height:29px;line-height:29px;font-size:21px;color:#ececec;font-weight:normal;white-space:nowrap;">0 °</div><svg style="position:absolute;left:3271px;top:406.0px;" width="14" height="11" viewBox="0 0 14 11"><path d="M0 0 H14 L7 11Z" fill="#ddd"/></svg><svg style="position:absolute;left:3312px;top:310px;" width="14" height="32" viewBox="0 0 14 32"><rect x="2" y="2" width="9" height="13" rx="4.5" fill="none" stroke="#999" stroke-width="2"/><rect x="2" y="17" width="9" height="13" rx="4.5" fill="none" stroke="#999" stroke-width="2"/></svg><div style="position:absolute;left:2832px;top:464px;width:526px;height:8px;background:#2a2a2a;"></div><div style="position:absolute;left:2832px;top:472px;width:526px;height:40px;background:#292929;"></div><div style="position:absolute;left:2846px;top:488px;width:2px;height:18px;background:#555;"></div><div style="position:absolute;left:2852px;top:488px;width:2px;height:18px;background:#555;"></div><div style="position:absolute;left:2870px;top:472px;width:76px;height:40px;background:#3c3c3c;"></div><div style="position:absolute;left:2876px;top:476.5px;height:29px;line-height:29px;font-size:21px;color:#f0f0f0;font-weight:normal;white-space:nowrap;">Colour</div><div style="position:absolute;left:2956px;top:476.5px;height:29px;line-height:29px;font-size:21px;color:#8c8c8c;font-weight:normal;white-space:nowrap;">Stroke</div><div style="position:absolute;left:3027px;top:484px;width:2px;height:22px;background:#555;"></div><div style="position:absolute;left:3036px;top:476.5px;height:29px;line-height:29px;font-size:21px;color:#8c8c8c;font-weight:normal;white-space:nowrap;">Swatches</div><div style="position:absolute;left:3137px;top:484px;width:2px;height:22px;background:#555;"></div><div style="position:absolute;left:3146px;top:476.5px;height:29px;line-height:29px;font-size:21px;color:#8c8c8c;font-weight:normal;white-space:nowrap;">Effects</div><svg style="position:absolute;left:3328px;top:487px;" width="28" height="22" viewBox="0 0 28 22"><g fill="#eee"><rect x="0" y="0" width="18" height="2"/><rect x="0" y="4.5" width="18" height="2"/><rect x="0" y="9" width="18" height="2"/><rect x="0" y="13.5" width="18" height="2"/></g><path d="M19 15 H27 L23 20Z" fill="#eee"/></svg><div style="position:absolute;left:2832px;top:512px;width:526px;height:419px;background:#3c3c3c;"></div><svg style="position:absolute;left:2838px;top:520px;" width="96" height="96" viewBox="0 0 96 96"><circle cx="60" cy="56" r="25" fill="#fff" stroke="#2a2a2a" stroke-width="1.5"/><path d="M41 73 L77 37" stroke="#e8372c" stroke-width="1.5"/><circle cx="40" cy="35" r="20" fill="none" stroke="#fff" stroke-width="12"/><circle cx="40" cy="35" r="26.5" fill="none" stroke="#2a2a2a" stroke-width="1.2"/><circle cx="40" cy="35" r="13.5" fill="none" stroke="#2a2a2a" stroke-width="1.2"/><path d="M19 52 L24 47 M57 15 L62 10" stroke="#e8372c" stroke-width="1.5"/></svg><svg style="position:absolute;left:2846px;top:583px;" width="24" height="24" viewBox="0 0 24 24"><circle cx="12" cy="12" r="10.5" fill="#fff" stroke="#111" stroke-width="2"/><path d="M5 19 L19 5" stroke="#e8372c" stroke-width="2"/></svg><svg style="position:absolute;left:2903px;top:525px;" width="22" height="22" viewBox="0 0 22 22"><path d="M3 7 Q10 1 17 9 M3 7 L7 3 M3 7 L8 9 M17 9 L19 19 M19 19 L16 15 M19 19 L21 14" fill="none" stroke="#ccc" stroke-width="1.6"/></svg><svg style="position:absolute;left:2946px;top:530px;" width="34" height="34" viewBox="0 0 34 34"><path d="M2 32 L4 27 L18 13 L22 17 L8 31Z" fill="#b8b8b8" stroke="#666" stroke-width="1"/><path d="M18 11 L24 17 L27 14 L21 8Z" fill="#333"/><circle cx="27" cy="7" r="6" fill="#d8a858"/></svg><div style="position:absolute;left:2981px;top:530px;width:31px;height:31px;background:#080808;border-radius:50%;box-shadow:0 0 0 2px #2f2f2f;"></div><div style="position:absolute;left:3107px;top:538px;width:40px;height:44px;background:#303030;"></div><svg style="position:absolute;left:3117px;top:547px;" width="20" height="26" viewBox="0 0 20 26"><path d="M4 12 V8 A6 6 0 0 1 16 8 V12" fill="none" stroke="#bbb" stroke-width="2.4"/><rect x="1" y="11" width="18" height="14" rx="3" fill="#bbb"/></svg><div style="position:absolute;left:3155px;top:540px;width:183px;height:40px;background:#363636;border-radius:6px;box-sizing:border-box;border:1.5px solid #262626;"></div><div style="position:absolute;left:3164px;top:546.5px;height:29px;line-height:29px;font-size:21px;color:#ececec;font-weight:normal;white-space:nowrap;">CMYK</div><svg style="position:absolute;left:3316px;top:549px;" width="14" height="22" viewBox="0 0 14 22"><path d="M2 8 L7 2 L12 8Z M2 14 L7 20 L12 14Z" fill="#ccc"/></svg><div style="position:absolute;left:2846px;top:620.5px;height:29px;line-height:29px;font-size:21px;color:#e0e0e0;font-weight:normal;white-space:nowrap;">C</div><div style="position:absolute;left:2872px;top:629px;width:393px;height:18px;background:linear-gradient(90deg,#1e1e1e,#001a3a);border-radius:9px;box-shadow:0 1.5px 0 #6a6a6a;"></div><div style="position:absolute;left:2874px;top:627px;width:20px;height:20px;background:#222;border-radius:50%;box-sizing:border-box;border:3.5px solid #fff;"></div><div style="position:absolute;left:3274px;top:619px;width:71px;height:36px;background:#2b2b2b;border-radius:6px;box-shadow:0 1px 0 #4a4a4a;"></div><div style="position:absolute;left:3282px;top:623.5px;height:29px;line-height:29px;font-size:21px;color:#ececec;font-weight:normal;white-space:nowrap;">0</div><div style="position:absolute;left:2846px;top:664.5px;height:29px;line-height:29px;font-size:21px;color:#e0e0e0;font-weight:normal;white-space:nowrap;">M</div><div style="position:absolute;left:2872px;top:673px;width:393px;height:18px;background:linear-gradient(90deg,#1e1e1e,#2a0004);border-radius:9px;box-shadow:0 1.5px 0 #6a6a6a;"></div><div style="position:absolute;left:2874px;top:671px;width:20px;height:20px;background:#222;border-radius:50%;box-sizing:border-box;border:3.5px solid #fff;"></div><div style="position:absolute;left:3274px;top:663px;width:71px;height:36px;background:#2b2b2b;border-radius:6px;box-shadow:0 1px 0 #4a4a4a;"></div><div style="position:absolute;left:3282px;top:667.5px;height:29px;line-height:29px;font-size:21px;color:#ececec;font-weight:normal;white-space:nowrap;">0</div><div style="position:absolute;left:2846px;top:705.5px;height:29px;line-height:29px;font-size:21px;color:#e0e0e0;font-weight:normal;white-space:nowrap;">Y</div><div style="position:absolute;left:2872px;top:714px;width:393px;height:18px;background:linear-gradient(90deg,#1e1e1e,#1e1a00);border-radius:9px;box-shadow:0 1.5px 0 #6a6a6a;"></div><div style="position:absolute;left:2874px;top:712px;width:20px;height:20px;background:#222;border-radius:50%;box-sizing:border-box;border:3.5px solid #fff;"></div><div style="position:absolute;left:3274px;top:704px;width:71px;height:36px;background:#2b2b2b;border-radius:6px;box-shadow:0 1px 0 #4a4a4a;"></div><div style="position:absolute;left:3282px;top:708.5px;height:29px;line-height:29px;font-size:21px;color:#ececec;font-weight:normal;white-space:nowrap;">0</div><div style="position:absolute;left:2846px;top:748.5px;height:29px;line-height:29px;font-size:21px;color:#e0e0e0;font-weight:normal;white-space:nowrap;">K</div><div style="position:absolute;left:2872px;top:757px;width:393px;height:18px;background:linear-gradient(90deg,#fff,#888 50%,#1e1e1e);border-radius:9px;box-shadow:0 1.5px 0 #6a6a6a;"></div><div style="position:absolute;left:3244px;top:755px;width:20px;height:20px;background:#222;border-radius:50%;box-sizing:border-box;border:3.5px solid #fff;"></div><div style="position:absolute;left:3274px;top:747px;width:71px;height:36px;background:#2b2b2b;border-radius:6px;box-shadow:0 1px 0 #4a4a4a;"></div><div style="position:absolute;left:3282px;top:751.5px;height:29px;line-height:29px;font-size:21px;color:#ececec;font-weight:normal;white-space:nowrap;">100</div><div style="position:absolute;left:2848px;top:796px;width:496px;height:50px;background:#000;"></div><div style="position:absolute;left:2850px;top:798px;width:492px;height:42px;background:linear-gradient(180deg,rgba(255,255,255,1) 0%,rgba(255,255,255,0) 45%,rgba(0,0,0,0) 55%,rgba(0,0,0,1) 100%),linear-gradient(90deg,#e02020 0%,#f0e040 17%,#50c040 33%,#40c0f0 50%,#3040c0 66%,#e040a0 83%,#e02020 100%);"></div><div style="position:absolute;left:2849px;top:849.5px;height:29px;line-height:29px;font-size:21px;color:#ececec;font-weight:normal;white-space:nowrap;">Opacity</div><svg style="position:absolute;left:2851px;top:888px;" width="24" height="24" viewBox="0 0 24 24"><circle cx="12" cy="12" r="11" fill="#fff"/><path d="M5 19 L19 5" stroke="#e8372c" stroke-width="2.4"/></svg><div style="position:absolute;left:2888px;top:891px;width:321px;height:19px;background:#333;border-radius:10px;box-shadow:inset 0 0 0 1.5px #5a5a5a;"></div><div style="position:absolute;left:3228px;top:879px;width:121px;height:41px;background:#383838;border-radius:6px;box-sizing:border-box;border:1.5px solid #262626;"></div><div style="position:absolute;left:3313px;top:880px;width:1.5px;height:39px;background:#262626;"></div><div style="position:absolute;left:3236px;top:885.5px;height:29px;line-height:29px;font-size:21px;color:#7c7c7c;font-weight:normal;white-space:nowrap;">100 %</div><svg style="position:absolute;left:3324px;top:895px;" width="14" height="11" viewBox="0 0 14 11"><path d="M0 0 H14 L7 11Z" fill="#ddd"/></svg><div style="position:absolute;left:2832px;top:931px;width:526px;height:9px;background:#2a2a2a;"></div><div style="position:absolute;left:2832px;top:940px;width:526px;height:40px;background:#292929;"></div><div style="position:absolute;left:2846px;top:956px;width:2px;height:18px;background:#555;"></div><div style="position:absolute;left:2852px;top:956px;width:2px;height:18px;background:#555;"></div><div style="position:absolute;left:2870px;top:940px;width:108px;height:40px;background:#3c3c3c;"></div><div style="position:absolute;left:2876px;top:944.5px;height:29px;line-height:29px;font-size:21px;color:#f0f0f0;font-weight:normal;white-space:nowrap;">Character</div><div style="position:absolute;left:3022px;top:944.5px;height:29px;line-height:29px;font-size:21px;color:#8c8c8c;font-weight:normal;white-space:nowrap;">Par</div><div style="position:absolute;left:3093px;top:952px;width:2px;height:22px;background:#555;"></div><div style="position:absolute;left:3132px;top:944.5px;height:29px;line-height:29px;font-size:21px;color:#8c8c8c;font-weight:normal;white-space:nowrap;">Frm</div><div style="position:absolute;left:3207px;top:952px;width:2px;height:22px;background:#555;"></div><div style="position:absolute;left:3246px;top:944.5px;height:29px;line-height:29px;font-size:21px;color:#8c8c8c;font-weight:normal;white-space:nowrap;">TSt</div><svg style="position:absolute;left:3328px;top:955px;" width="28" height="22" viewBox="0 0 28 22"><g fill="#eee"><rect x="0" y="0" width="18" height="2"/><rect x="0" y="4.5" width="18" height="2"/><rect x="0" y="9" width="18" height="2"/><rect x="0" y="13.5" width="18" height="2"/></g><path d="M19 15 H27 L23 20Z" fill="#eee"/></svg><div style="position:absolute;left:2832px;top:980px;width:526px;height:168px;background:#3c3c3c;"></div><div style="position:absolute;left:2852px;top:999px;width:161px;height:39px;background:#353535;border-radius:6px;box-sizing:border-box;border:1.5px solid #262626;"></div><div style="position:absolute;left:2862px;top:1005.0px;height:29px;line-height:29px;font-size:21px;color:#ececec;font-weight:normal;white-space:nowrap;">All Fonts</div><svg style="position:absolute;left:2989px;top:1008.5px;" width="14" height="21" viewBox="0 0 14 21"><path d="M2 8 L7 2 L12 8Z M2 13 L7 19 L12 13Z" fill="#ccc"/></svg><div style="position:absolute;left:3018px;top:999px;width:326px;height:40px;background:#2c2c2c;border-radius:6px;"></div><div style="position:absolute;left:3310px;top:1000px;width:1.5px;height:38px;background:#262626;"></div><div style="position:absolute;left:3028px;top:1005.5px;height:29px;line-height:29px;font-size:21px;color:#ececec;font-weight:normal;white-space:nowrap;">Arial</div><svg style="position:absolute;left:3321px;top:1015px;" width="14" height="11" viewBox="0 0 14 11"><path d="M0 0 H14 L7 11Z" fill="#ddd"/></svg><div style="position:absolute;left:2852px;top:1045px;width:161px;height:39px;background:#2c2c2c;border-radius:6px;"></div><div style="position:absolute;left:2979px;top:1046px;width:1.5px;height:37px;background:#262626;"></div><div style="position:absolute;left:2858px;top:1050.5px;height:29px;line-height:29px;font-size:21px;color:#ececec;font-weight:normal;white-space:nowrap;">12 pt</div><svg style="position:absolute;left:2990px;top:1060px;" width="14" height="11" viewBox="0 0 14 11"><path d="M0 0 H14 L7 11Z" fill="#ddd"/></svg><div style="position:absolute;left:3019px;top:1045px;width:231px;height:39px;background:#353535;border-radius:6px;box-sizing:border-box;border:1.5px solid #262626;"></div><div style="position:absolute;left:3029px;top:1051.0px;height:29px;line-height:29px;font-size:21px;color:#ececec;font-weight:normal;white-space:nowrap;">Regular</div><svg style="position:absolute;left:3226px;top:1054.5px;" width="14" height="21" viewBox="0 0 14 21"><path d="M2 8 L7 2 L12 8Z M2 13 L7 19 L12 13Z" fill="#ccc"/></svg><div style="position:absolute;left:3255px;top:1047px;width:42px;height:37px;background:#080808;border-radius:3px;box-shadow:0 0 0 1.5px #2a2a2a;"></div><svg style="position:absolute;left:3303px;top:1047px;" width="41" height="37" viewBox="0 0 41 37"><rect width="41" height="37" fill="#fff"/><path d="M9.0 37 L32.0 0" stroke="#e8372c" stroke-width="2"/></svg><div style="position:absolute;left:2852px;top:1091px;width:492px;height:39px;background:#2c2c2c;border-radius:6px;"></div><div style="position:absolute;left:3310px;top:1092px;width:1.5px;height:37px;background:#262626;"></div><div style="position:absolute;left:2859px;top:1096.5px;height:29px;line-height:29px;font-size:21px;color:#ececec;font-weight:normal;white-space:nowrap;">[No Style]</div><svg style="position:absolute;left:3321px;top:1106px;" width="14" height="11" viewBox="0 0 14 11"><path d="M0 0 H14 L7 11Z" fill="#ddd"/></svg><div style="position:absolute;left:2832px;top:1148px;width:526px;height:44px;background:#2b2b2b;"></div><svg style="position:absolute;left:2852px;top:1160.0px;" width="16" height="20" viewBox="0 0 16 20"><path d="M0 0 V20 L16 10Z" fill="#8a8a8a"/></svg><div style="position:absolute;left:2880px;top:1155.5px;height:29px;line-height:29px;font-size:21px;color:#ececec;font-weight:normal;white-space:nowrap;">Decorations</div><div style="position:absolute;left:2832px;top:1192px;width:526px;height:43px;background:#2b2b2b;"></div><svg style="position:absolute;left:2850px;top:1205.5px;" width="20" height="16" viewBox="0 0 20 16"><path d="M0 0 H20 L10 16Z" fill="#8a8a8a"/></svg><div style="position:absolute;left:2880px;top:1199.0px;height:29px;line-height:29px;font-size:21px;color:#ececec;font-weight:normal;white-space:nowrap;">Positioning and Transform</div><div style="position:absolute;left:2832px;top:1235px;width:526px;height:246px;background:#3c3c3c;"></div><div style="position:absolute;left:2904px;top:1248px;width:125px;height:39px;background:#2b2b2b;border-radius:6px;"></div><div style="position:absolute;left:2995px;top:1249px;width:1.5px;height:37px;background:#262626;"></div><div style="position:absolute;left:2910px;top:1253.5px;height:29px;line-height:29px;font-size:21px;color:#ececec;font-weight:normal;white-space:nowrap;">(0 ‰)</div><svg style="position:absolute;left:3006px;top:1262px;" width="14" height="11" viewBox="0 0 14 11"><path d="M0 0 H14 L7 11Z" fill="#ddd"/></svg><div style="position:absolute;left:3034px;top:1248px;width:21px;height:38px;background:#2c2c2c;border-radius:8px;box-shadow:inset 0 0 0 1.5px #242424;"></div><svg style="position:absolute;left:3038px;top:1255px;" width="13" height="24" viewBox="0 0 13 24"><path d="M1.5 8 L6.5 2.5 L11.5 8Z M1.5 16 L6.5 21.5 L11.5 16Z" fill="#ccc"/></svg><div style="position:absolute;left:2904px;top:1292px;width:125px;height:39px;background:#2b2b2b;border-radius:6px;"></div><div style="position:absolute;left:2995px;top:1293px;width:1.5px;height:37px;background:#262626;"></div><div style="position:absolute;left:2910px;top:1297.5px;height:29px;line-height:29px;font-size:21px;color:#ececec;font-weight:normal;white-space:nowrap;">0 ‰</div><svg style="position:absolute;left:3006px;top:1306px;" width="14" height="11" viewBox="0 0 14 11"><path d="M0 0 H14 L7 11Z" fill="#ddd"/></svg><div style="position:absolute;left:3034px;top:1292px;width:21px;height:38px;background:#2c2c2c;border-radius:8px;box-shadow:inset 0 0 0 1.5px #242424;"></div><svg style="position:absolute;left:3038px;top:1299px;" width="13" height="24" viewBox="0 0 13 24"><path d="M1.5 8 L6.5 2.5 L11.5 8Z M1.5 16 L6.5 21.5 L11.5 16Z" fill="#ccc"/></svg><div style="position:absolute;left:2904px;top:1336px;width:125px;height:39px;background:#2b2b2b;border-radius:6px;"></div><div style="position:absolute;left:2995px;top:1337px;width:1.5px;height:37px;background:#262626;"></div><div style="position:absolute;left:2910px;top:1341.5px;height:29px;line-height:29px;font-size:21px;color:#ececec;font-weight:normal;white-space:nowrap;">0 pt</div><svg style="position:absolute;left:3006px;top:1350px;" width="14" height="11" viewBox="0 0 14 11"><path d="M0 0 H14 L7 11Z" fill="#ddd"/></svg><div style="position:absolute;left:3034px;top:1336px;width:21px;height:38px;background:#2c2c2c;border-radius:8px;box-shadow:inset 0 0 0 1.5px #242424;"></div><svg style="position:absolute;left:3038px;top:1343px;" width="13" height="24" viewBox="0 0 13 24"><path d="M1.5 8 L6.5 2.5 L11.5 8Z M1.5 16 L6.5 21.5 L11.5 16Z" fill="#ccc"/></svg><div style="position:absolute;left:2904px;top:1382px;width:125px;height:39px;background:#2b2b2b;border-radius:6px;"></div><div style="position:absolute;left:2995px;top:1383px;width:1.5px;height:37px;background:#262626;"></div><div style="position:absolute;left:2910px;top:1387.5px;height:29px;line-height:29px;font-size:21px;color:#ececec;font-weight:normal;white-space:nowrap;">(12.4 pt)</div><svg style="position:absolute;left:3006px;top:1396px;" width="14" height="11" viewBox="0 0 14 11"><path d="M0 0 H14 L7 11Z" fill="#ddd"/></svg><div style="position:absolute;left:3034px;top:1382px;width:21px;height:38px;background:#2c2c2c;border-radius:8px;box-shadow:inset 0 0 0 1.5px #242424;"></div><svg style="position:absolute;left:3038px;top:1389px;" width="13" height="24" viewBox="0 0 13 24"><path d="M1.5 8 L6.5 2.5 L11.5 8Z M1.5 16 L6.5 21.5 L11.5 16Z" fill="#ccc"/></svg><div style="position:absolute;left:3172px;top:1248px;width:129px;height:39px;background:#2b2b2b;border-radius:6px;"></div><div style="position:absolute;left:3178px;top:1253.5px;height:29px;line-height:29px;font-size:21px;color:#ececec;font-weight:normal;white-space:nowrap;">0 °</div><div style="position:absolute;left:3307px;top:1248px;width:21px;height:38px;background:#2c2c2c;border-radius:8px;box-shadow:inset 0 0 0 1.5px #242424;"></div><svg style="position:absolute;left:3311px;top:1255px;" width="13" height="24" viewBox="0 0 13 24"><path d="M1.5 8 L6.5 2.5 L11.5 8Z M1.5 16 L6.5 21.5 L11.5 16Z" fill="#ccc"/></svg><div style="position:absolute;left:3172px;top:1292px;width:129px;height:39px;background:#2b2b2b;border-radius:6px;"></div><div style="position:absolute;left:3178px;top:1297.5px;height:29px;line-height:29px;font-size:21px;color:#ececec;font-weight:normal;white-space:nowrap;">100 %</div><div style="position:absolute;left:3307px;top:1292px;width:21px;height:38px;background:#2c2c2c;border-radius:8px;box-shadow:inset 0 0 0 1.5px #242424;"></div><svg style="position:absolute;left:3311px;top:1299px;" width="13" height="24" viewBox="0 0 13 24"><path d="M1.5 8 L6.5 2.5 L11.5 8Z M1.5 16 L6.5 21.5 L11.5 16Z" fill="#ccc"/></svg><div style="position:absolute;left:3172px;top:1336px;width:129px;height:39px;background:#2b2b2b;border-radius:6px;"></div><div style="position:absolute;left:3178px;top:1341.5px;height:29px;line-height:29px;font-size:21px;color:#ececec;font-weight:normal;white-space:nowrap;">100 %</div><div style="position:absolute;left:3307px;top:1336px;width:21px;height:38px;background:#2c2c2c;border-radius:8px;box-shadow:inset 0 0 0 1.5px #242424;"></div><svg style="position:absolute;left:3311px;top:1343px;" width="13" height="24" viewBox="0 0 13 24"><path d="M1.5 8 L6.5 2.5 L11.5 8Z M1.5 16 L6.5 21.5 L11.5 16Z" fill="#ccc"/></svg><div style="position:absolute;left:3169px;top:1381px;width:161px;height:40px;background:#353535;border-radius:6px;box-sizing:border-box;border:1.5px solid #262626;"></div><div style="position:absolute;left:3179px;top:1387.5px;height:29px;line-height:29px;font-size:21px;color:#ececec;font-weight:normal;white-space:nowrap;">None</div><svg style="position:absolute;left:3306px;top:1391.0px;" width="14" height="21" viewBox="0 0 14 21"><path d="M2 8 L7 2 L12 8Z M2 13 L7 19 L12 13Z" fill="#ccc"/></svg><svg style="position:absolute;left:2864px;top:1252px;" width="32" height="32" viewBox="0 0 32 32"><text x="0" y="20" font-family="Liberation Sans" font-size="19" fill="#d8d8d8">V/A</text><path d="M14 27 H30 M14 27 L17 24 M14 27 L17 30 M30 27 L27 24 M30 27 L27 30" stroke="#d8d8d8" stroke-width="1.3" fill="none"/></svg><svg style="position:absolute;left:2864px;top:1296px;" width="32" height="32" viewBox="0 0 32 32"><text x="2" y="18" font-family="Liberation Sans" font-size="18" fill="#d8d8d8">VA</text><path d="M3 21 H28 M2 27 H29 M2 27 L5 24 M2 27 L5 30 M29 27 L26 24 M29 27 L26 30" stroke="#d8d8d8" stroke-width="1.3" fill="none"/></svg><svg style="position:absolute;left:2864px;top:1338px;" width="32" height="34" viewBox="0 0 32 34"><text x="12" y="16" font-family="Liberation Sans" font-size="17" fill="#d8d8d8">A</text><path d="M11 19 H28 M5 20 V32 M2 23 L5 20 L8 23 M2 29 L5 32 L8 29" stroke="#d8d8d8" stroke-width="1.4" fill="none"/></svg><svg style="position:absolute;left:2864px;top:1382px;" width="32" height="36" viewBox="0 0 32 36"><text x="12" y="14" font-family="Liberation Sans" font-size="14" fill="#d8d8d8">A</text><text x="12" y="31" font-family="Liberation Sans" font-size="14" fill="#d8d8d8">A</text><path d="M11 17 H28 M11 33 H28 M5 18 V32 M2 21 L5 18 L8 21 M2 29 L5 32 L8 29" stroke="#d8d8d8" stroke-width="1.4" fill="none"/></svg><svg style="position:absolute;left:3136px;top:1252px;" width="26" height="32" viewBox="0 0 26 32"><text x="2" y="25" font-family="Liberation Serif" font-style="italic" font-size="28" fill="#d8d8d8">T</text></svg><svg style="position:absolute;left:3136px;top:1294px;" width="26" height="34" viewBox="0 0 26 34"><text x="3" y="22" font-family="Liberation Serif" font-size="26" fill="#d8d8d8">T</text><path d="M2 29 H22 M2 29 L5 26 M2 29 L5 32 M22 29 L19 26 M22 29 L19 32" stroke="#d8d8d8" stroke-width="1.4" fill="none"/></svg><svg style="position:absolute;left:3134px;top:1338px;" width="30" height="34" viewBox="0 0 30 34"><text x="9" y="26" font-family="Liberation Serif" font-size="26" fill="#d8d8d8">T</text><path d="M4 6 V28 M1 9 L4 6 L7 9 M1 25 L4 28 L7 25" stroke="#d8d8d8" stroke-width="1.6" fill="none"/></svg><div style="position:absolute;left:3136px;top:1387.0px;height:32px;line-height:32px;font-size:23px;color:#d8d8d8;font-weight:normal;white-space:nowrap;">S<b>:</b></div><div style="position:absolute;left:2899px;top:1432px;width:24px;height:25px;background:#333;border-radius:5px;box-shadow:inset 0 0 0 1.5px #252525;"></div><div style="position:absolute;left:2930px;top:1431.5px;height:29px;line-height:29px;font-size:21px;color:#ececec;font-weight:normal;white-space:nowrap;">No break</div><div style="position:absolute;left:2832px;top:1481px;width:526px;height:44px;background:#2b2b2b;"></div><svg style="position:absolute;left:2852px;top:1493.0px;" width="16" height="20" viewBox="0 0 16 20"><path d="M0 0 V20 L16 10Z" fill="#8a8a8a"/></svg><div style="position:absolute;left:2880px;top:1488.5px;height:29px;line-height:29px;font-size:21px;color:#ececec;font-weight:normal;white-space:nowrap;">Typography</div><div style="position:absolute;left:2832px;top:1525px;width:526px;height:45px;background:#2b2b2b;"></div><svg style="position:absolute;left:2852px;top:1537.5px;" width="16" height="20" viewBox="0 0 16 20"><path d="M0 0 V20 L16 10Z" fill="#8a8a8a"/></svg><div style="position:absolute;left:2880px;top:1533.0px;height:29px;line-height:29px;font-size:21px;color:#ececec;font-weight:normal;white-space:nowrap;">Language</div><div style="position:absolute;left:2832px;top:1570px;width:526px;height:45px;background:#2b2b2b;"></div><svg style="position:absolute;left:2852px;top:1582.5px;" width="16" height="20" viewBox="0 0 16 20"><path d="M0 0 V20 L16 10Z" fill="#8a8a8a"/></svg><div style="position:absolute;left:2880px;top:1578.0px;height:29px;line-height:29px;font-size:21px;color:#ececec;font-weight:normal;white-space:nowrap;">Optical Alignment</div><div style="position:absolute;left:0px;top:2058px;width:3360px;height:40px;background:#333333;border-radius:0 0 18px 18px;"></div><svg style="position:absolute;left:24px;top:2068px;" width="21" height="22" viewBox="0 0 21 22"><rect x="0" y="0" width="2.4" height="22" fill="#e0e0e0"/><path d="M21 1 V21 L5 11Z" fill="#e0e0e0"/></svg><svg style="position:absolute;left:61px;top:2069px;" width="18" height="20" viewBox="0 0 18 20"><path d="M17 0 V20 L0 10Z" fill="#e0e0e0"/></svg><div style="position:absolute;left:147px;top:2064.0px;height:30px;line-height:30px;font-size:22px;color:#e8e8e8;font-weight:normal;white-space:nowrap;">2,3 of 73</div><svg style="position:absolute;left:294px;top:2069px;" width="16" height="20" viewBox="0 0 16 20"><path d="M0 0 V20 L16 10Z" fill="#e0e0e0"/></svg><svg style="position:absolute;left:327px;top:2068px;" width="21" height="22" viewBox="0 0 21 22"><path d="M0 1 V21 L16 11Z" fill="#e0e0e0"/><rect x="18.6" y="0" width="2.4" height="22" fill="#e0e0e0"/></svg><svg style="position:absolute;left:366px;top:2064px;" width="26" height="30" viewBox="0 0 26 30"><rect x="5" y="5" width="20" height="24" fill="none" stroke="#999" stroke-width="1.6"/><rect x="1" y="1" width="19" height="24" fill="#333" stroke="#e0e0e0" stroke-width="1.8"/><g fill="#e0e0e0"><rect x="4" y="5" width="13" height="2"/><rect x="4" y="9.5" width="13" height="2"/><rect x="4" y="14" width="13" height="2"/><rect x="4" y="18.5" width="13" height="2"/></g></svg><svg style="position:absolute;left:418px;top:2066px;" width="26" height="26" viewBox="0 0 26 26"><path d="M4 21 V12 Q4 2 13 2 Q22 2 22 12 V21Z" fill="#e0463c"/><path d="M8 12 Q8 6 12 5" stroke="#f4a09a" stroke-width="2" fill="none"/><rect x="1" y="21" width="24" height="4" rx="1" fill="#888"/></svg><div style="position:absolute;left:470px;top:2064.0px;height:30px;line-height:30px;font-size:22px;color:#b8b8b8;font-weight:normal;white-space:nowrap;">'img1 ok.tiff' selected. <b style="color:#fff">Drag</b> to move selection. <b style="color:#fff">Click</b> another object to select it. <b style="color:#fff">Click</b> on an empty area to deselect selection.</div><div style="position:absolute;left:0;top:50px;width:3360px;height:2050px;border-radius:22px 22px 18px 18px;box-shadow:inset 0 0 0 1.5px #5a5a5a;pointer-events:none;"></div></body></html>
